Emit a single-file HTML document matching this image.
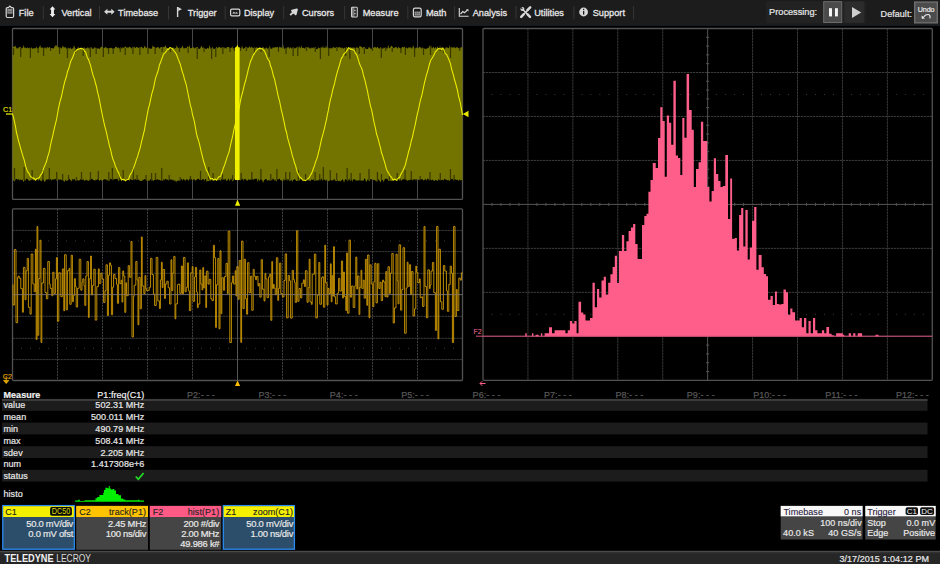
<!DOCTYPE html>
<html><head><meta charset="utf-8"><title>LeCroy</title>
<style>
html,body{margin:0;padding:0;background:#000;width:940px;height:564px;overflow:hidden;}
svg{display:block;position:absolute;left:0;top:0;font-family:"Liberation Sans", sans-serif;}
</style></head><body>
<svg width="940" height="564" viewBox="0 0 940 564">
<rect x="0" y="0" width="940" height="25" fill="#1c1c1c"/>
<rect x="0" y="25" width="940" height="1" fill="#121a24"/>
<text x="18.7" y="16.1" font-size="9.2" fill="#e8e8e8" text-anchor="start" font-weight="normal" stroke="#e8e8e8" stroke-width="0.28" letter-spacing="0.02" >File</text>
<text x="61.4" y="16.1" font-size="9.2" fill="#e8e8e8" text-anchor="start" font-weight="normal" stroke="#e8e8e8" stroke-width="0.28" letter-spacing="0.02" >Vertical</text>
<text x="118.1" y="16.1" font-size="9.2" fill="#e8e8e8" text-anchor="start" font-weight="normal" stroke="#e8e8e8" stroke-width="0.28" letter-spacing="0.02" >Timebase</text>
<text x="187.8" y="16.1" font-size="9.2" fill="#e8e8e8" text-anchor="start" font-weight="normal" stroke="#e8e8e8" stroke-width="0.28" letter-spacing="0.02" >Trigger</text>
<text x="243.9" y="16.1" font-size="9.2" fill="#e8e8e8" text-anchor="start" font-weight="normal" stroke="#e8e8e8" stroke-width="0.28" letter-spacing="0.02" >Display</text>
<text x="301.9" y="16.1" font-size="9.2" fill="#e8e8e8" text-anchor="start" font-weight="normal" stroke="#e8e8e8" stroke-width="0.28" letter-spacing="0.02" >Cursors</text>
<text x="362.7" y="16.1" font-size="9.2" fill="#e8e8e8" text-anchor="start" font-weight="normal" stroke="#e8e8e8" stroke-width="0.28" letter-spacing="0.02" >Measure</text>
<text x="425.9" y="16.1" font-size="9.2" fill="#e8e8e8" text-anchor="start" font-weight="normal" stroke="#e8e8e8" stroke-width="0.28" letter-spacing="0.02" >Math</text>
<text x="472.7" y="16.1" font-size="9.2" fill="#e8e8e8" text-anchor="start" font-weight="normal" stroke="#e8e8e8" stroke-width="0.28" letter-spacing="0.02" >Analysis</text>
<text x="534.2" y="16.1" font-size="9.2" fill="#e8e8e8" text-anchor="start" font-weight="normal" stroke="#e8e8e8" stroke-width="0.28" letter-spacing="0.02" >Utilities</text>
<text x="592.7" y="16.1" font-size="9.2" fill="#e8e8e8" text-anchor="start" font-weight="normal" stroke="#e8e8e8" stroke-width="0.28" letter-spacing="0.02" >Support</text>
<rect x="42.8" y="6" width="1" height="13.3" fill="#363636"/>
<rect x="99" y="6" width="1" height="13.3" fill="#363636"/>
<rect x="168" y="6" width="1" height="13.3" fill="#363636"/>
<rect x="224.7" y="6" width="1" height="13.3" fill="#363636"/>
<rect x="283.2" y="6" width="1" height="13.3" fill="#363636"/>
<rect x="344.1" y="6" width="1" height="13.3" fill="#363636"/>
<rect x="407.3" y="6" width="1" height="13.3" fill="#363636"/>
<rect x="454.1" y="6" width="1" height="13.3" fill="#363636"/>
<rect x="515.5" y="6" width="1" height="13.3" fill="#363636"/>
<rect x="573.4" y="6" width="1" height="13.3" fill="#363636"/>
<rect x="633.1" y="6" width="1" height="13.3" fill="#363636"/>
<path d="M7.4 7.6 H8.3 L9.9 6 L11.5 7.6 H12.4 Q13.6 7.6 13.6 8.8 V16.3 Q13.6 17.5 12.4 17.5 H7.4 Q6.2 17.5 6.2 16.3 V8.8 Q6.2 7.6 7.4 7.6 Z" fill="none" stroke="#d8d8d8" stroke-width="1.2"/>
<rect x="7.3" y="8.8" width="5.2" height="4.9" fill="#8a8a8a"/><rect x="7.3" y="11" width="5.2" height="0.7" fill="#555"/>
<path d="M52.5 6.3 L55.4 9.6 L53.9 9.6 L53.9 13.9 L55.4 13.9 L52.5 17.2 L49.6 13.9 L51.1 13.9 L51.1 9.6 L49.6 9.6 Z" fill="#f0f0f0"/>
<path d="M104.1 11.8 L107.4 8.8 L107.4 10.8 L111.3 10.8 L111.3 8.8 L114.6 11.8 L111.3 14.8 L111.3 12.8 L107.4 12.8 L107.4 14.8 Z" fill="#d8d8d8"/>
<path d="M177.6 7 L177.6 17" stroke="#d8d8d8" stroke-width="1.4"/><path d="M178.2 7 L181.9 9.2 L178.2 11 Z" fill="#d8d8d8"/>
<rect x="230.6" y="9.2" width="9.2" height="6.6" rx="1.3" fill="none" stroke="#d8d8d8" stroke-width="1.2"/>
<path d="M232.2 13.6 L233.8 11.8 L235.2 12.9 L236.4 11.9 L238.2 13.6 Z" fill="#d8d8d8"/>
<path d="M290.2 15.2 L293.2 12.2 M292 10.6 L296.9 9.4 L295.7 14.3 Z" stroke="#d8d8d8" stroke-width="1.9" fill="#d8d8d8" stroke-linejoin="round"/>
<rect x="351.6" y="7.2" width="5.6" height="9.8" rx="0.8" fill="#777" stroke="#d8d8d8" stroke-width="1.1"/>
<rect x="354.4" y="7.8" width="2.3" height="8.6" fill="#2a2a2a"/><rect x="354.3" y="9.8" width="1.2" height="1.3" fill="#d8d8d8"/><rect x="354.3" y="13" width="1.2" height="1.3" fill="#d8d8d8"/>
<rect x="413.4" y="8.2" width="7.8" height="8.6" rx="1.6" fill="#1c1c1c" stroke="#d8d8d8" stroke-width="1.2"/>
<rect x="414.6" y="11.6" width="5.4" height="4" fill="#9a9a9a"/><path d="M416.4 11.6 V15.6 M418.2 11.6 V15.6 M414.6 13.6 H420" stroke="#555" stroke-width="0.5"/>
<path d="M459.3 8 L459.3 16.3 L468.6 16.3" fill="none" stroke="#d8d8d8" stroke-width="1.1"/>
<path d="M460.5 14 L462.8 11.5 L464.5 12.8 L467.5 10" fill="none" stroke="#d8d8d8" stroke-width="1.2"/><path d="M466 9.2 L468.5 9.2 L468.5 11.6 Z" fill="#d8d8d8"/>
<path d="M522.3 9 L529 15.8 M529 9 L522.2 15.8" stroke="#d8d8d8" stroke-width="1.5"/>
<path d="M527.4 10.2 L530.2 7.4 M521.2 16.8 L523.6 14.4 M527.6 14.4 L530 16.8" stroke="#d8d8d8" stroke-width="2.5" stroke-linecap="round"/>
<circle cx="522.4" cy="8.9" r="2" fill="#d8d8d8"/><path d="M520.9 7.4 L522.3 8.8" stroke="#1c1c1c" stroke-width="1.1"/>
<circle cx="583.6" cy="12" r="4.4" fill="#d8d8d8"/><rect x="583" y="11" width="1.3" height="3.6" fill="#1c1c1c"/><rect x="583" y="8.8" width="1.3" height="1.3" fill="#1c1c1c"/>
<rect x="766" y="1.2" width="100" height="22.2" fill="#222222"/>
<text x="769.1" y="15.2" font-size="9.2" fill="#e8e8e8" text-anchor="start" font-weight="normal" stroke="#e8e8e8" stroke-width="0.2" >Processing:</text>
<rect x="823.7" y="1.7" width="18" height="20.8" fill="#4a4a4a" stroke="#6c6c6c" stroke-width="1"/>
<rect x="829" y="8.2" width="3" height="8.2" fill="#f4f4f4"/><rect x="835" y="8.2" width="2.9" height="8.2" fill="#f4f4f4"/>
<rect x="844.5" y="1.5" width="19.4" height="21.3" fill="#2c2c2c"/>
<path d="M852 7 L861.2 12.5 L852 18.1 Z" fill="#cfcfcf"/>
<text x="880.6" y="16.9" font-size="9" fill="#e8e8e8" text-anchor="start" font-weight="normal" stroke="#e8e8e8" stroke-width="0.2" letter-spacing="0.05" >Default:</text>
<rect x="914.7" y="2.1" width="22.6" height="20.7" fill="#4c4c4c" stroke="#6e6e6e" stroke-width="1.4"/>
<text x="926.1" y="11.8" font-size="7.2" fill="#eeeeee" text-anchor="middle" font-weight="normal" stroke="#eeeeee" stroke-width="0.15" letter-spacing="-0.1" >Undo</text>
<path d="M923.6 16.8 Q925.8 14.4 928.2 14.5 Q930.8 14.9 929.8 18.4" fill="none" stroke="#eee" stroke-width="1.1"/><path d="M921.6 15.6 L921.8 18.8 L925 18.4 Z" fill="#f4f4f4"/>
<path d="M57.5 28.5 L57.5 199.4" stroke="#474747" stroke-width="1"/><path d="M102.5 28.5 L102.5 199.4" stroke="#474747" stroke-width="1"/><path d="M147.5 28.5 L147.5 199.4" stroke="#474747" stroke-width="1"/><path d="M192.5 28.5 L192.5 199.4" stroke="#474747" stroke-width="1"/><path d="M282.5 28.5 L282.5 199.4" stroke="#474747" stroke-width="1"/><path d="M327.5 28.5 L327.5 199.4" stroke="#474747" stroke-width="1"/><path d="M372.5 28.5 L372.5 199.4" stroke="#474747" stroke-width="1"/><path d="M417.5 28.5 L417.5 199.4" stroke="#474747" stroke-width="1"/><path d="M12.5 49.86 L462.5 49.86" stroke="#3c3c3c" stroke-width="1" stroke-dasharray="2.3 0.7"/><path d="M12.5 71.22 L462.5 71.22" stroke="#3c3c3c" stroke-width="1" stroke-dasharray="2.3 0.7"/><path d="M12.5 92.59 L462.5 92.59" stroke="#3c3c3c" stroke-width="1" stroke-dasharray="2.3 0.7"/><path d="M12.5 135.31 L462.5 135.31" stroke="#3c3c3c" stroke-width="1" stroke-dasharray="2.3 0.7"/><path d="M12.5 156.68 L462.5 156.68" stroke="#3c3c3c" stroke-width="1" stroke-dasharray="2.3 0.7"/><path d="M12.5 178.04 L462.5 178.04" stroke="#3c3c3c" stroke-width="1" stroke-dasharray="2.3 0.7"/><path d="M237.5 28.5 L237.5 199.4 M12.5 113.95 L462.5 113.95" stroke="#555555" stroke-width="1"/><path d="M21 60.54 h1 M30 60.54 h1 M39 60.54 h1 M48 60.54 h1 M66 60.54 h1 M75 60.54 h1 M84 60.54 h1 M93 60.54 h1 M111 60.54 h1 M120 60.54 h1 M129 60.54 h1 M138 60.54 h1 M156 60.54 h1 M165 60.54 h1 M174 60.54 h1 M183 60.54 h1 M201 60.54 h1 M210 60.54 h1 M219 60.54 h1 M228 60.54 h1 M246 60.54 h1 M255 60.54 h1 M264 60.54 h1 M273 60.54 h1 M291 60.54 h1 M300 60.54 h1 M309 60.54 h1 M318 60.54 h1 M336 60.54 h1 M345 60.54 h1 M354 60.54 h1 M363 60.54 h1 M381 60.54 h1 M390 60.54 h1 M399 60.54 h1 M408 60.54 h1 M426 60.54 h1 M435 60.54 h1 M444 60.54 h1 M453 60.54 h1 M21 167.36 h1 M30 167.36 h1 M39 167.36 h1 M48 167.36 h1 M66 167.36 h1 M75 167.36 h1 M84 167.36 h1 M93 167.36 h1 M111 167.36 h1 M120 167.36 h1 M129 167.36 h1 M138 167.36 h1 M156 167.36 h1 M165 167.36 h1 M174 167.36 h1 M183 167.36 h1 M201 167.36 h1 M210 167.36 h1 M219 167.36 h1 M228 167.36 h1 M246 167.36 h1 M255 167.36 h1 M264 167.36 h1 M273 167.36 h1 M291 167.36 h1 M300 167.36 h1 M309 167.36 h1 M318 167.36 h1 M336 167.36 h1 M345 167.36 h1 M354 167.36 h1 M363 167.36 h1 M381 167.36 h1 M390 167.36 h1 M399 167.36 h1 M408 167.36 h1 M426 167.36 h1 M435 167.36 h1 M444 167.36 h1 M453 167.36 h1" stroke="#3a3a3a" stroke-width="1"/><rect x="12.5" y="28.5" width="450" height="170.9" rx="1" fill="none" stroke="#525252" stroke-width="1.3"/>
<path d="M57.5 208.8 L57.5 380.5" stroke="#3c3c3c" stroke-width="1" stroke-dasharray="2.3 0.7"/><path d="M102.5 208.8 L102.5 380.5" stroke="#3c3c3c" stroke-width="1" stroke-dasharray="2.3 0.7"/><path d="M147.5 208.8 L147.5 380.5" stroke="#3c3c3c" stroke-width="1" stroke-dasharray="2.3 0.7"/><path d="M192.5 208.8 L192.5 380.5" stroke="#3c3c3c" stroke-width="1" stroke-dasharray="2.3 0.7"/><path d="M282.5 208.8 L282.5 380.5" stroke="#3c3c3c" stroke-width="1" stroke-dasharray="2.3 0.7"/><path d="M327.5 208.8 L327.5 380.5" stroke="#3c3c3c" stroke-width="1" stroke-dasharray="2.3 0.7"/><path d="M372.5 208.8 L372.5 380.5" stroke="#3c3c3c" stroke-width="1" stroke-dasharray="2.3 0.7"/><path d="M417.5 208.8 L417.5 380.5" stroke="#3c3c3c" stroke-width="1" stroke-dasharray="2.3 0.7"/><path d="M12.5 230.4 L462.5 230.4" stroke="#3c3c3c" stroke-width="1" stroke-dasharray="2.3 0.7"/><path d="M12.5 251.6 L462.5 251.6" stroke="#3c3c3c" stroke-width="1" stroke-dasharray="2.3 0.7"/><path d="M12.5 273.3 L462.5 273.3" stroke="#3c3c3c" stroke-width="1" stroke-dasharray="2.3 0.7"/><path d="M12.5 316.3 L462.5 316.3" stroke="#3c3c3c" stroke-width="1" stroke-dasharray="2.3 0.7"/><path d="M12.5 338.3 L462.5 338.3" stroke="#3c3c3c" stroke-width="1" stroke-dasharray="2.3 0.7"/><path d="M12.5 359.6 L462.5 359.6" stroke="#3c3c3c" stroke-width="1" stroke-dasharray="2.3 0.7"/><path d="M237.5 208.8 L237.5 380.5 M12.5 294.6 L462.5 294.6" stroke="#555555" stroke-width="1"/><path d="M21 240.99 h1 M30 240.99 h1 M39 240.99 h1 M48 240.99 h1 M66 240.99 h1 M75 240.99 h1 M84 240.99 h1 M93 240.99 h1 M111 240.99 h1 M120 240.99 h1 M129 240.99 h1 M138 240.99 h1 M156 240.99 h1 M165 240.99 h1 M174 240.99 h1 M183 240.99 h1 M201 240.99 h1 M210 240.99 h1 M219 240.99 h1 M228 240.99 h1 M246 240.99 h1 M255 240.99 h1 M264 240.99 h1 M273 240.99 h1 M291 240.99 h1 M300 240.99 h1 M309 240.99 h1 M318 240.99 h1 M336 240.99 h1 M345 240.99 h1 M354 240.99 h1 M363 240.99 h1 M381 240.99 h1 M390 240.99 h1 M399 240.99 h1 M408 240.99 h1 M426 240.99 h1 M435 240.99 h1 M444 240.99 h1 M453 240.99 h1 M21 348.31 h1 M30 348.31 h1 M39 348.31 h1 M48 348.31 h1 M66 348.31 h1 M75 348.31 h1 M84 348.31 h1 M93 348.31 h1 M111 348.31 h1 M120 348.31 h1 M129 348.31 h1 M138 348.31 h1 M156 348.31 h1 M165 348.31 h1 M174 348.31 h1 M183 348.31 h1 M201 348.31 h1 M210 348.31 h1 M219 348.31 h1 M228 348.31 h1 M246 348.31 h1 M255 348.31 h1 M264 348.31 h1 M273 348.31 h1 M291 348.31 h1 M300 348.31 h1 M309 348.31 h1 M318 348.31 h1 M336 348.31 h1 M345 348.31 h1 M354 348.31 h1 M363 348.31 h1 M381 348.31 h1 M390 348.31 h1 M399 348.31 h1 M408 348.31 h1 M426 348.31 h1 M435 348.31 h1 M444 348.31 h1 M453 348.31 h1" stroke="#3a3a3a" stroke-width="1"/><rect x="12.5" y="208.8" width="450" height="171.7" rx="1" fill="none" stroke="#525252" stroke-width="1.3"/>
<path d="M527.93 28.5 L527.93 380.3" stroke="#3c3c3c" stroke-width="1" stroke-dasharray="2.3 0.7"/><path d="M572.86 28.5 L572.86 380.3" stroke="#3c3c3c" stroke-width="1" stroke-dasharray="2.3 0.7"/><path d="M617.79 28.5 L617.79 380.3" stroke="#3c3c3c" stroke-width="1" stroke-dasharray="2.3 0.7"/><path d="M662.72 28.5 L662.72 380.3" stroke="#3c3c3c" stroke-width="1" stroke-dasharray="2.3 0.7"/><path d="M752.58 28.5 L752.58 380.3" stroke="#3c3c3c" stroke-width="1" stroke-dasharray="2.3 0.7"/><path d="M797.51 28.5 L797.51 380.3" stroke="#3c3c3c" stroke-width="1" stroke-dasharray="2.3 0.7"/><path d="M842.44 28.5 L842.44 380.3" stroke="#3c3c3c" stroke-width="1" stroke-dasharray="2.3 0.7"/><path d="M887.37 28.5 L887.37 380.3" stroke="#3c3c3c" stroke-width="1" stroke-dasharray="2.3 0.7"/><path d="M483 72.47 L932.3 72.47" stroke="#3c3c3c" stroke-width="1" stroke-dasharray="2.3 0.7"/><path d="M483 116.45 L932.3 116.45" stroke="#3c3c3c" stroke-width="1" stroke-dasharray="2.3 0.7"/><path d="M483 160.43 L932.3 160.43" stroke="#3c3c3c" stroke-width="1" stroke-dasharray="2.3 0.7"/><path d="M483 248.38 L932.3 248.38" stroke="#3c3c3c" stroke-width="1" stroke-dasharray="2.3 0.7"/><path d="M483 292.35 L932.3 292.35" stroke="#3c3c3c" stroke-width="1" stroke-dasharray="2.3 0.7"/><path d="M483 336.32 L932.3 336.32" stroke="#3c3c3c" stroke-width="1" stroke-dasharray="2.3 0.7"/><path d="M707.65 28.5 L707.65 380.3 M483 204.4 L932.3 204.4" stroke="#555555" stroke-width="1"/><path d="M491.99 202.8 L491.99 206 M500.97 202.8 L500.97 206 M509.96 202.8 L509.96 206 M518.94 202.8 L518.94 206 M536.92 202.8 L536.92 206 M545.9 202.8 L545.9 206 M554.89 202.8 L554.89 206 M563.87 202.8 L563.87 206 M581.85 202.8 L581.85 206 M590.83 202.8 L590.83 206 M599.82 202.8 L599.82 206 M608.8 202.8 L608.8 206 M626.78 202.8 L626.78 206 M635.76 202.8 L635.76 206 M644.75 202.8 L644.75 206 M653.73 202.8 L653.73 206 M671.71 202.8 L671.71 206 M680.69 202.8 L680.69 206 M689.68 202.8 L689.68 206 M698.66 202.8 L698.66 206 M716.64 202.8 L716.64 206 M725.62 202.8 L725.62 206 M734.61 202.8 L734.61 206 M743.59 202.8 L743.59 206 M761.57 202.8 L761.57 206 M770.55 202.8 L770.55 206 M779.54 202.8 L779.54 206 M788.52 202.8 L788.52 206 M806.5 202.8 L806.5 206 M815.48 202.8 L815.48 206 M824.47 202.8 L824.47 206 M833.45 202.8 L833.45 206 M851.43 202.8 L851.43 206 M860.41 202.8 L860.41 206 M869.4 202.8 L869.4 206 M878.38 202.8 L878.38 206 M896.36 202.8 L896.36 206 M905.34 202.8 L905.34 206 M914.33 202.8 L914.33 206 M923.31 202.8 L923.31 206 M706.05 37.3 L709.25 37.3 M706.05 46.09 L709.25 46.09 M706.05 54.89 L709.25 54.89 M706.05 63.68 L709.25 63.68 M706.05 81.27 L709.25 81.27 M706.05 90.06 L709.25 90.06 M706.05 98.86 L709.25 98.86 M706.05 107.66 L709.25 107.66 M706.05 125.25 L709.25 125.25 M706.05 134.04 L709.25 134.04 M706.05 142.84 L709.25 142.84 M706.05 151.63 L709.25 151.63 M706.05 169.22 L709.25 169.22 M706.05 178.02 L709.25 178.02 M706.05 186.81 L709.25 186.81 M706.05 195.6 L709.25 195.6 M706.05 213.19 L709.25 213.19 M706.05 221.99 L709.25 221.99 M706.05 230.79 L709.25 230.79 M706.05 239.58 L709.25 239.58 M706.05 257.17 L709.25 257.17 M706.05 265.97 L709.25 265.97 M706.05 274.76 L709.25 274.76 M706.05 283.56 L709.25 283.56 M706.05 301.15 L709.25 301.15 M706.05 309.94 L709.25 309.94 M706.05 318.74 L709.25 318.74 M706.05 327.53 L709.25 327.53 M706.05 345.12 L709.25 345.12 M706.05 353.92 L709.25 353.92 M706.05 362.71 L709.25 362.71 M706.05 371.5 L709.25 371.5" stroke="#505050" stroke-width="1"/><path d="M491.49 94.46 h1 M500.47 94.46 h1 M509.46 94.46 h1 M518.44 94.46 h1 M536.42 94.46 h1 M545.4 94.46 h1 M554.39 94.46 h1 M563.37 94.46 h1 M581.35 94.46 h1 M590.33 94.46 h1 M599.32 94.46 h1 M608.3 94.46 h1 M626.28 94.46 h1 M635.26 94.46 h1 M644.25 94.46 h1 M653.23 94.46 h1 M671.21 94.46 h1 M680.19 94.46 h1 M689.18 94.46 h1 M698.16 94.46 h1 M716.14 94.46 h1 M725.12 94.46 h1 M734.11 94.46 h1 M743.09 94.46 h1 M761.07 94.46 h1 M770.05 94.46 h1 M779.04 94.46 h1 M788.02 94.46 h1 M806 94.46 h1 M814.98 94.46 h1 M823.97 94.46 h1 M832.95 94.46 h1 M850.93 94.46 h1 M859.91 94.46 h1 M868.9 94.46 h1 M877.88 94.46 h1 M895.86 94.46 h1 M904.84 94.46 h1 M913.83 94.46 h1 M922.81 94.46 h1 M491.49 314.34 h1 M500.47 314.34 h1 M509.46 314.34 h1 M518.44 314.34 h1 M536.42 314.34 h1 M545.4 314.34 h1 M554.39 314.34 h1 M563.37 314.34 h1 M581.35 314.34 h1 M590.33 314.34 h1 M599.32 314.34 h1 M608.3 314.34 h1 M626.28 314.34 h1 M635.26 314.34 h1 M644.25 314.34 h1 M653.23 314.34 h1 M671.21 314.34 h1 M680.19 314.34 h1 M689.18 314.34 h1 M698.16 314.34 h1 M716.14 314.34 h1 M725.12 314.34 h1 M734.11 314.34 h1 M743.09 314.34 h1 M761.07 314.34 h1 M770.05 314.34 h1 M779.04 314.34 h1 M788.02 314.34 h1 M806 314.34 h1 M814.98 314.34 h1 M823.97 314.34 h1 M832.95 314.34 h1 M850.93 314.34 h1 M859.91 314.34 h1 M868.9 314.34 h1 M877.88 314.34 h1 M895.86 314.34 h1 M904.84 314.34 h1 M913.83 314.34 h1 M922.81 314.34 h1" stroke="#3a3a3a" stroke-width="1"/><rect x="483" y="28.5" width="449.3" height="351.8" rx="1" fill="none" stroke="#525252" stroke-width="1.3"/>
<polygon points="12.5,47.48 13.25,47.1 14,46.35 14.75,46.79 15.5,45.43 16.25,48.68 17,47.24 17.75,48.97 18.5,47.65 19.25,46.81 20,47.4 20.75,46.98 21.5,48.66 22.25,48.1 23,47.59 23.75,44.87 24.5,48.33 25.25,47.45 26,47.79 26.75,48.61 27.5,47.29 28.25,47.96 29,48.45 29.75,47.6 30.5,48.52 31.25,47.04 32,48.53 32.75,48.8 33.5,48.37 34.25,48.09 35,48.72 35.75,47.84 36.5,46.85 37.25,48.25 38,48.67 38.75,47.63 39.5,46.75 40.25,44.75 41,48.54 41.75,47.29 42.5,47.41 43.25,48.02 44,48.67 44.75,47.37 45.5,47.56 46.25,49 47,47.12 47.75,47.26 48.5,48.11 49.25,46.71 50,47.59 50.75,48.99 51.5,47.94 52.25,48.07 53,48.57 53.75,48.61 54.5,46.74 55.25,44.87 56,47.09 56.75,44.7 57.5,46.94 58.25,46.76 59,48.17 59.75,47.31 60.5,47.57 61.25,48.74 62,47.82 62.75,45.26 63.5,47.34 64.25,46.96 65,47.97 65.75,46.82 66.5,49.05 67.25,48.37 68,47.58 68.75,48.55 69.5,48.57 70.25,47.24 71,49.06 71.75,48.63 72.5,48.48 73.25,47.94 74,44.97 74.75,47.32 75.5,49 76.25,48.95 77,48.99 77.75,47.23 78.5,47.17 79.25,48.2 80,48.72 80.75,48.27 81.5,46.9 82.25,48.88 83,48.5 83.75,47.13 84.5,47.5 85.25,49.03 86,47.66 86.75,48.44 87.5,47 88.25,48.87 89,47.05 89.75,49.05 90.5,47.54 91.25,46.94 92,48.26 92.75,48.94 93.5,48.79 94.25,47.21 95,47.4 95.75,48.11 96.5,47.71 97.25,48.88 98,47.8 98.75,48.87 99.5,48.9 100.25,47.98 101,46.74 101.75,46.64 102.5,47.11 103.25,48.44 104,47.48 104.75,48.03 105.5,46.95 106.25,47.3 107,48.55 107.75,48.05 108.5,48.89 109.25,48.17 110,47.93 110.75,47.79 111.5,47.85 112.25,48.38 113,48.96 113.75,48.04 114.5,48.72 115.25,46.99 116,46.87 116.75,46.88 117.5,48.58 118.25,47.07 119,48.28 119.75,48.82 120.5,47.23 121.25,47.66 122,49.08 122.75,47.09 123.5,47.94 124.25,47.17 125,47.32 125.75,46.09 126.5,48.2 127.25,46.85 128,48.59 128.75,46.95 129.5,46.8 130.25,47.35 131,47.71 131.75,48.67 132.5,47.06 133.25,48.07 134,46.14 134.75,47.57 135.5,48.22 136.25,46.9 137,46.86 137.75,47.79 138.5,48.03 139.25,47.34 140,47.96 140.75,46.96 141.5,46.82 142.25,47.45 143,48.52 143.75,47.9 144.5,45.66 145.25,46.74 146,48.02 146.75,47.84 147.5,46.96 148.25,47.74 149,48.7 149.75,47.92 150.5,49.06 151.25,48.7 152,48.23 152.75,45.36 153.5,46.87 154.25,47.31 155,46.9 155.75,48.79 156.5,47.38 157.25,47.4 158,47.08 158.75,47.33 159.5,49.03 160.25,47.29 161,47.44 161.75,46.7 162.5,47.84 163.25,47.18 164,46.71 164.75,46.92 165.5,45.06 166.25,47.26 167,47.97 167.75,48.28 168.5,48.81 169.25,47.48 170,47.06 170.75,47.83 171.5,48.84 172.25,48.46 173,47.03 173.75,47.91 174.5,48.63 175.25,48.1 176,48.34 176.75,45.08 177.5,47.16 178.25,48.04 179,48.2 179.75,47.37 180.5,48.5 181.25,47.98 182,46.86 182.75,45.47 183.5,48.45 184.25,48.48 185,47.89 185.75,47.85 186.5,48.54 187.25,46.11 188,47.31 188.75,47.43 189.5,44.9 190.25,48.31 191,48.32 191.75,47.94 192.5,47.55 193.25,47.18 194,47.59 194.75,48.67 195.5,47.78 196.25,47.2 197,47.21 197.75,47.04 198.5,48.99 199.25,48.67 200,48.83 200.75,47.26 201.5,45.38 202.25,47.88 203,47.42 203.75,47.53 204.5,48.09 205.25,48.71 206,48.92 206.75,48.86 207.5,47.59 208.25,49.1 209,47.57 209.75,45.11 210.5,48.7 211.25,48.95 212,47.34 212.75,47.16 213.5,48.99 214.25,48.65 215,48.89 215.75,48.02 216.5,46.82 217.25,47.78 218,48.25 218.75,46.82 219.5,47.01 220.25,47.52 221,48.47 221.75,47.32 222.5,47.42 223.25,47.65 224,47.09 224.75,48.87 225.5,47.23 226.25,49.09 227,47.04 227.75,46.92 228.5,46.92 229.25,47.32 230,48.83 230.75,47.69 231.5,47.96 232.25,45.71 233,49.02 233.75,47.91 234.5,48.77 235.25,47.35 236,47.66 236.75,48.99 237.5,46.38 238.25,48.4 239,47.84 239.75,46.7 240.5,48.92 241.25,48.75 242,45.18 242.75,47.95 243.5,48.96 244.25,48.25 245,47.8 245.75,46.79 246.5,47.26 247.25,48.25 248,47.01 248.75,48.23 249.5,45.78 250.25,48.1 251,47.24 251.75,46.73 252.5,47.81 253.25,48.25 254,47.84 254.75,47.29 255.5,48.39 256.25,46.75 257,48.32 257.75,47.32 258.5,48.92 259.25,46.78 260,47.71 260.75,47.18 261.5,48.47 262.25,47.19 263,47.45 263.75,47.25 264.5,48.53 265.25,48.98 266,47.15 266.75,47.7 267.5,48.98 268.25,47.64 269,49.04 269.75,45.31 270.5,48.86 271.25,48.46 272,48.94 272.75,47.15 273.5,47.65 274.25,47.61 275,47.5 275.75,46.71 276.5,47.54 277.25,47 278,47.2 278.75,48.67 279.5,46.42 280.25,47.59 281,47.16 281.75,47.38 282.5,48.65 283.25,44.45 284,48.91 284.75,48.49 285.5,47.51 286.25,49 287,47.33 287.75,47.46 288.5,46.71 289.25,48.9 290,47.05 290.75,47.84 291.5,48.99 292.25,47.3 293,47.88 293.75,47.14 294.5,48.47 295.25,48.55 296,47.49 296.75,47.57 297.5,46.89 298.25,48.51 299,45.74 299.75,47.48 300.5,48.82 301.25,45.08 302,47.9 302.75,47.77 303.5,47.7 304.25,48.32 305,48.73 305.75,46.99 306.5,47.41 307.25,47.6 308,47.18 308.75,47.29 309.5,48.82 310.25,47.48 311,49.08 311.75,47.26 312.5,48.27 313.25,46.95 314,48.67 314.75,47.13 315.5,46.99 316.25,49.04 317,48.93 317.75,48.78 318.5,47.32 319.25,47.96 320,48.19 320.75,47.58 321.5,47.19 322.25,48.14 323,45.51 323.75,48.33 324.5,47.45 325.25,48.61 326,45.34 326.75,48.02 327.5,46.92 328.25,48.37 329,47.38 329.75,48.99 330.5,48.06 331.25,47.7 332,49.09 332.75,47.17 333.5,46.94 334.25,47.72 335,47.67 335.75,47.81 336.5,46.74 337.25,48.24 338,46.91 338.75,47.59 339.5,47.05 340.25,47.95 341,46.96 341.75,48.63 342.5,47.17 343.25,48.96 344,47.67 344.75,47.63 345.5,48.19 346.25,47.08 347,47.23 347.75,48.73 348.5,47.14 349.25,47.66 350,47.62 350.75,47.29 351.5,47.76 352.25,48.11 353,46.98 353.75,48.02 354.5,47.43 355.25,48.1 356,48.28 356.75,46.8 357.5,47.87 358.25,48.53 359,47.8 359.75,45.66 360.5,46.34 361.25,47.02 362,46.9 362.75,48.57 363.5,46.83 364.25,47.61 365,47.03 365.75,49.09 366.5,48.66 367.25,49.06 368,49 368.75,47.1 369.5,47.31 370.25,48.51 371,48.85 371.75,48.66 372.5,47.91 373.25,47.2 374,47.91 374.75,46.79 375.5,47.09 376.25,48.33 377,47.1 377.75,46.98 378.5,48.23 379.25,48.8 380,48.09 380.75,46.95 381.5,48.21 382.25,48.61 383,49.08 383.75,47.56 384.5,47.76 385.25,48.03 386,47.31 386.75,49.06 387.5,48.29 388.25,44.58 389,48.18 389.75,47.93 390.5,47.02 391.25,45.77 392,45.94 392.75,47.24 393.5,48.11 394.25,48.2 395,47.02 395.75,47.28 396.5,46.93 397.25,48.79 398,47.66 398.75,46.73 399.5,48.05 400.25,48.25 401,48.95 401.75,47.3 402.5,46.81 403.25,47.67 404,46.84 404.75,46.73 405.5,48.96 406.25,47.18 407,47.92 407.75,48.65 408.5,47.44 409.25,46.82 410,48.58 410.75,46.72 411.5,48.49 412.25,48.48 413,45.32 413.75,46.79 414.5,48.5 415.25,48.73 416,47.34 416.75,47.75 417.5,47.96 418.25,48.24 419,47.22 419.75,46.74 420.5,47.27 421.25,48.97 422,47.48 422.75,47.49 423.5,48.88 424.25,48.36 425,49.05 425.75,48.72 426.5,48.76 427.25,48.44 428,47.44 428.75,47.97 429.5,44.81 430.25,48.93 431,44.64 431.75,48.36 432.5,48.37 433.25,46.86 434,47.57 434.75,48.67 435.5,46.86 436.25,48.89 437,46.96 437.75,46.59 438.5,48.65 439.25,48.68 440,45.13 440.75,48.52 441.5,47.47 442.25,46.75 443,47.38 443.75,47.58 444.5,49.01 445.25,48.74 446,46.77 446.75,47.75 447.5,47.53 448.25,47.99 449,48.32 449.75,45.11 450.5,48.53 451.25,46.71 452,47.88 452.75,47.14 453.5,47.53 454.25,47.33 455,47.38 455.75,48.38 456.5,46.96 457.25,46.89 458,48.37 458.75,48.21 459.5,47.66 460.25,48.56 461,46.76 461.75,47.33 462.5,47.9 462.5,180.95 461.75,179.68 461,180.56 460.25,180.24 459.5,179.28 458.75,180.83 458,180.53 457.25,179.62 456.5,180.04 455.75,179.69 455,179.01 454.25,179.2 453.5,180.83 452.75,178.77 452,179.28 451.25,178.78 450.5,178.87 449.75,180.49 449,181.19 448.25,179.45 447.5,180.68 446.75,179.6 446,180.21 445.25,178.92 444.5,178.4 443.75,180.67 443,179.8 442.25,179.69 441.5,180.11 440.75,180.52 440,179.59 439.25,180.55 438.5,178.99 437.75,180.94 437,180.4 436.25,180.34 435.5,179.66 434.75,181.02 434,180.65 433.25,180.19 432.5,179.57 431.75,180.16 431,180.33 430.25,178.85 429.5,180.63 428.75,179.77 428,178.41 427.25,178.78 426.5,181.12 425.75,178.6 425,179.92 424.25,179.84 423.5,180.79 422.75,179.53 422,178.93 421.25,179.48 420.5,178.67 419.75,179.92 419,180.34 418.25,179.56 417.5,179.36 416.75,178.97 416,181.12 415.25,178.96 414.5,179.48 413.75,178.69 413,180.73 412.25,179.71 411.5,178.98 410.75,179.36 410,180.76 409.25,179.7 408.5,179.94 407.75,180.8 407,180.85 406.25,179.43 405.5,179.58 404.75,178.31 404,179.14 403.25,179.21 402.5,179.59 401.75,180.28 401,181.09 400.25,178.47 399.5,181.02 398.75,178.72 398,180.22 397.25,181.16 396.5,179.05 395.75,178.73 395,180.63 394.25,178.76 393.5,180.68 392.75,180.97 392,180.64 391.25,180.98 390.5,180.82 389.75,180.38 389,180.53 388.25,180.95 387.5,179.09 386.75,178.72 386,178.48 385.25,178.73 384.5,179.79 383.75,182.57 383,179.7 382.25,180.3 381.5,179.42 380.75,182.46 380,181.43 379.25,180.35 378.5,179.29 377.75,179.83 377,182.43 376.25,180.18 375.5,180.89 374.75,179.72 374,180.61 373.25,179.61 372.5,179.96 371.75,179.18 371,179.51 370.25,179.12 369.5,181.22 368.75,180.68 368,179.25 367.25,180.06 366.5,182.1 365.75,180.96 365,178.45 364.25,178.32 363.5,181.06 362.75,180.27 362,181.03 361.25,180.15 360.5,180.39 359.75,180.34 359,180.3 358.25,180.59 357.5,180.39 356.75,181.04 356,179.41 355.25,180.66 354.5,179.07 353.75,179.57 353,179.59 352.25,182.24 351.5,178.42 350.75,180.73 350,181.06 349.25,178.34 348.5,180.08 347.75,181.24 347,179.54 346.25,180.23 345.5,178.76 344.75,180.35 344,182.94 343.25,180.13 342.5,179.03 341.75,180.41 341,180.44 340.25,181.75 339.5,180.43 338.75,181.1 338,181.19 337.25,179.64 336.5,181.37 335.75,180.49 335,180.88 334.25,178.48 333.5,180.02 332.75,180.33 332,180.69 331.25,180.23 330.5,179.55 329.75,180.66 329,180.65 328.25,181.13 327.5,180.41 326.75,179.3 326,181.23 325.25,180.1 324.5,179.59 323.75,179.43 323,180.11 322.25,180.72 321.5,178.31 320.75,179.57 320,180.75 319.25,178.43 318.5,180.74 317.75,180.02 317,180.85 316.25,180.35 315.5,180.45 314.75,180.69 314,180.55 313.25,179 312.5,180.33 311.75,178.92 311,180.55 310.25,181.29 309.5,180.62 308.75,180.04 308,180.96 307.25,179.73 306.5,178.87 305.75,178.84 305,179.39 304.25,179.51 303.5,180.74 302.75,179.42 302,180.2 301.25,178.77 300.5,179.33 299.75,180.34 299,180.9 298.25,180 297.5,180.64 296.75,181.14 296,180.76 295.25,179.46 294.5,178.94 293.75,179.97 293,179.67 292.25,182.23 291.5,179.49 290.75,181.18 290,179.99 289.25,181.17 288.5,179.48 287.75,178.78 287,181.28 286.25,178.42 285.5,179.36 284.75,181.01 284,178.44 283.25,180.43 282.5,181.55 281.75,180.56 281,180.33 280.25,180.07 279.5,178.62 278.75,179.07 278,179.74 277.25,179.02 276.5,181.77 275.75,180.74 275,178.96 274.25,180.9 273.5,178.72 272.75,178.59 272,180.83 271.25,179.66 270.5,180.77 269.75,180.18 269,180.39 268.25,179.96 267.5,180.91 266.75,179.54 266,179.11 265.25,179.3 264.5,179.77 263.75,181.01 263,183.03 262.25,180.3 261.5,179.73 260.75,179.07 260,179.39 259.25,181.29 258.5,178.59 257.75,182.44 257,179.18 256.25,178.35 255.5,179.32 254.75,178.31 254,179.88 253.25,179.61 252.5,178.95 251.75,178.71 251,180.61 250.25,179.06 249.5,180.13 248.75,179.12 248,180.14 247.25,180.73 246.5,180.37 245.75,179.52 245,178.47 244.25,179.31 243.5,180.89 242.75,178.35 242,179.73 241.25,179.1 240.5,180.79 239.75,178.79 239,181.12 238.25,179.64 237.5,178.66 236.75,180.75 236,179.26 235.25,179.44 234.5,178.48 233.75,181.16 233,179.84 232.25,181.85 231.5,178.97 230.75,178.61 230,180.94 229.25,180.4 228.5,178.35 227.75,180.03 227,180.41 226.25,180.91 225.5,178.44 224.75,179.78 224,179.14 223.25,179.52 222.5,180.08 221.75,178.74 221,180.54 220.25,180.78 219.5,179.47 218.75,180.82 218,179.49 217.25,180.63 216.5,179.02 215.75,179.61 215,180.71 214.25,180.75 213.5,178.46 212.75,181.17 212,179.05 211.25,180.2 210.5,180.76 209.75,180.09 209,181.21 208.25,181.11 207.5,180.73 206.75,182.24 206,179.1 205.25,179.12 204.5,181.07 203.75,179.05 203,179.6 202.25,179.16 201.5,180.24 200.75,180.08 200,179.84 199.25,179.7 198.5,178.75 197.75,178.69 197,179.52 196.25,180.12 195.5,180.82 194.75,180.01 194,178.9 193.25,179.68 192.5,180.14 191.75,179.23 191,178.96 190.25,179.45 189.5,178.34 188.75,180.89 188,179.97 187.25,179.15 186.5,179.19 185.75,180.52 185,180.4 184.25,179.62 183.5,178.63 182.75,181.18 182,178.76 181.25,179.36 180.5,180.15 179.75,180.76 179,180.52 178.25,180.58 177.5,180.65 176.75,181.04 176,182.44 175.25,180.06 174.5,181.19 173.75,179.55 173,180.92 172.25,179.44 171.5,179.67 170.75,179.18 170,179.97 169.25,179.27 168.5,180.85 167.75,179.63 167,179.21 166.25,180.03 165.5,178.56 164.75,179.27 164,180.81 163.25,178.91 162.5,181.13 161.75,179.99 161,181.06 160.25,179.92 159.5,179.85 158.75,180.36 158,179.37 157.25,179.35 156.5,180.33 155.75,178.6 155,179.5 154.25,180.02 153.5,181.19 152.75,179.62 152,181.29 151.25,179.89 150.5,178.81 149.75,181.24 149,179.84 148.25,180.98 147.5,180.76 146.75,180.96 146,178.77 145.25,179.83 144.5,178.86 143.75,180.19 143,179.36 142.25,181.03 141.5,180.66 140.75,180.98 140,180.83 139.25,180.3 138.5,179.79 137.75,179.1 137,179.89 136.25,180.02 135.5,178.66 134.75,180.58 134,178.6 133.25,179.87 132.5,180.14 131.75,180.03 131,179.27 130.25,179.36 129.5,180.91 128.75,180.05 128,179.65 127.25,178.46 126.5,180.05 125.75,179.62 125,180.91 124.25,180.86 123.5,181 122.75,179.21 122,181.18 121.25,181.15 120.5,179.47 119.75,178.96 119,180.93 118.25,180.68 117.5,178.82 116.75,178.86 116,179.17 115.25,178.64 114.5,179.46 113.75,178.5 113,180.78 112.25,179.03 111.5,179.15 110.75,178.4 110,179.32 109.25,180.96 108.5,180.81 107.75,179.63 107,180.71 106.25,179.36 105.5,179.43 104.75,178.92 104,179.81 103.25,179.66 102.5,180.42 101.75,181 101,179.4 100.25,180.12 99.5,180.92 98.75,179.84 98,179.11 97.25,179.45 96.5,180 95.75,179.82 95,180.85 94.25,180.29 93.5,179.99 92.75,179.8 92,178.5 91.25,178.98 90.5,180.45 89.75,179.51 89,180.62 88.25,180.88 87.5,180.49 86.75,180.29 86,179.54 85.25,180.4 84.5,180.84 83.75,180.19 83,178.65 82.25,180.5 81.5,178.75 80.75,178.89 80,180.06 79.25,180.21 78.5,180.82 77.75,180.45 77,179.6 76.25,181.02 75.5,180.63 74.75,178.43 74,180.61 73.25,178.63 72.5,178.93 71.75,181.94 71,179.48 70.25,180.79 69.5,178.57 68.75,179.57 68,180.37 67.25,180.79 66.5,181.05 65.75,179.59 65,181.08 64.25,181.99 63.5,180.72 62.75,179.94 62,180.21 61.25,179.76 60.5,179.53 59.75,179.23 59,180.42 58.25,179.01 57.5,179.85 56.75,181.11 56,179.2 55.25,178.73 54.5,179.3 53.75,179.94 53,178.81 52.25,180.1 51.5,180.6 50.75,178.64 50,179.38 49.25,178.48 48.5,178.89 47.75,179.64 47,179.27 46.25,179.39 45.5,180.5 44.75,181.99 44,181.24 43.25,178.63 42.5,179.6 41.75,181.77 41,180.23 40.25,181.11 39.5,179.05 38.75,180.26 38,180.82 37.25,178.86 36.5,180.84 35.75,178.81 35,180.79 34.25,179.28 33.5,180.78 32.75,179.41 32,179.41 31.25,180.15 30.5,180.18 29.75,180.42 29,181.13 28.25,179.8 27.5,179.2 26.75,178.54 26,178.79 25.25,181.29 24.5,179.62 23.75,182.15 23,180.87 22.25,179.58 21.5,180.28 20.75,179.56 20,179.62 19.25,180.78 18.5,178.79 17.75,179.63 17,179.34 16.25,178.56 15.5,179.68 14.75,181.03 14,181.22 13.25,180.16 12.5,178.48" fill="#737300"/>
<path d="M13.5 48 v7 M20.67 48 v9 M30.37 48 v10 M38.13 48 v5 M43.58 48 v8 M50.53 48 v3 M59.54 48 v6 M67.45 48 v10 M75.44 48 v5 M83.24 48 v8 M90.34 48 v9 M96.18 48 v6 M103.36 48 v9 M108.55 48 v6 M113.23 48 v6 M120.29 48 v4 M125.23 48 v7 M132.95 48 v6 M139.9 48 v7 M148.01 48 v6 M155.11 48 v6 M162.13 48 v4 M170.41 48 v4 M179.44 48 v4 M188.15 48 v5 M197.26 48 v11 M204.06 48 v4 M211.63 48 v11 M215.79 48 v9 M222.83 48 v6 M229.99 48 v4 M234.38 48 v3 M240.51 48 v3 M246.43 48 v3 M254.49 48 v6 M260.98 48 v4 M269.08 48 v9 M278.48 48 v4 M286.02 48 v6 M293.18 48 v8 M297.77 48 v8 M306.5 48 v3 M315.36 48 v4 M320.42 48 v11 M328.71 48 v8 M336.9 48 v3 M345.71 48 v8 M349.86 48 v11 M355.49 48 v4 M359.21 48 v6 M364.36 48 v6 M372.37 48 v3 M381.32 48 v10 M385.56 48 v3 M392.23 48 v4 M400.94 48 v5 M405.41 48 v7 M414.59 48 v9 M423.53 48 v7 M430.53 48 v7 M440.2 48 v3 M443.86 48 v5 M450.52 48 v10 M459.7 48 v3" stroke="#3a3a00" stroke-width="1.25"/>
<path d="M14.5 180 v-12 M24.14 180 v-13 M32.14 180 v-10 M42.89 180 v-10 M49.34 180 v-12 M56.72 180 v-8 M62.69 180 v-6 M68.53 180 v-5 M76.44 180 v-3 M81.53 180 v-8 M90.48 180 v-8 M98.31 180 v-9 M108.84 180 v-8 M112.39 180 v-12 M119.51 180 v-6 M123.17 180 v-10 M133.24 180 v-12 M137.08 180 v-5 M146.03 180 v-5 M151.58 180 v-7 M155.55 180 v-7 M161.73 180 v-12 M169.19 180 v-5 M180.13 180 v-3 M190.49 180 v-4 M200.54 180 v-9 M208.79 180 v-13 M213.03 180 v-7 M222.48 180 v-6 M232.52 180 v-5 M241.13 180 v-7 M251.85 180 v-8 M260.9 180 v-11 M270.8 180 v-6 M276.93 180 v-11 M285.8 180 v-8 M289.75 180 v-8 M298.29 180 v-10 M305.57 180 v-6 M315.13 180 v-8 M319.77 180 v-6 M323.32 180 v-13 M330.22 180 v-10 M336.69 180 v-7 M347.16 180 v-12 M351.16 180 v-7 M360.06 180 v-7 M369.01 180 v-11 M377.45 180 v-8 M381.5 180 v-6 M389.37 180 v-4 M397.26 180 v-7 M405.11 180 v-10 M411.29 180 v-9 M420.2 180 v-4 M429.99 180 v-8 M440.23 180 v-7 M450.47 180 v-11 M454.14 180 v-5" stroke="#3a3a00" stroke-width="1.25"/>
<polyline points="12.5,113.62 13.5,117.4 14.5,121.55 15.5,126.71 16.5,132.53 17.5,136.38 18.5,140.81 19.5,144.16 20.5,147.99 21.5,151.31 22.5,154.8 23.5,157.96 24.5,161.06 25.5,165.59 26.5,168.71 27.5,171.72 28.5,172.65 29.5,174.37 30.5,176.67 31.5,176.99 32.5,178.06 33.5,178.12 34.5,178.73 35.5,180.11 36.5,178.77 37.5,178.53 38.5,178.08 39.5,177.53 40.5,175.02 41.5,174.09 42.5,172.35 43.5,168.61 44.5,166.27 45.5,163.89 46.5,161.51 47.5,157.28 48.5,154.36 49.5,150.81 50.5,145.12 51.5,140.61 52.5,136.85 53.5,132.03 54.5,127.52 55.5,123.6 56.5,119.67 57.5,113.97 58.5,108.4 59.5,103.66 60.5,99.73 61.5,96.31 62.5,91.49 63.5,86.97 64.5,82.64 65.5,79.28 66.5,76.24 67.5,71.52 68.5,69.26 69.5,65.86 70.5,62.02 71.5,59.64 72.5,57.83 73.5,55.3 74.5,52.23 75.5,51.29 76.5,50.41 77.5,49.46 78.5,49.17 79.5,48.74 80.5,48.23 81.5,48.62 82.5,48.74 83.5,49.34 84.5,51.07 85.5,51.91 86.5,54.9 87.5,58.1 88.5,59.35 89.5,62.4 90.5,65.06 91.5,69.35 92.5,73.34 93.5,76.62 94.5,79.12 95.5,83.25 96.5,86.73 97.5,91.86 98.5,95.62 99.5,100.48 100.5,105.54 101.5,110.8 102.5,115.74 103.5,120.51 104.5,125.02 105.5,128.97 106.5,132.69 107.5,137.41 108.5,141.3 109.5,146.13 110.5,149.11 111.5,153.86 112.5,158.03 113.5,160.65 114.5,162.97 115.5,166.68 116.5,168.16 117.5,171.25 118.5,172.39 119.5,175.39 120.5,177.88 121.5,179.17 122.5,179.43 123.5,179.38 124.5,179.61 125.5,180.73 126.5,179.9 127.5,179.58 128.5,179.26 129.5,176.55 130.5,174.09 131.5,173.2 132.5,170.6 133.5,168.14 134.5,165.36 135.5,162.57 136.5,159.16 137.5,156.92 138.5,153.17 139.5,150.34 140.5,146.52 141.5,141.8 142.5,138.18 143.5,133.83 144.5,129.78 145.5,123.7 146.5,118.55 147.5,113.14 148.5,107.87 149.5,104.8 150.5,99.8 151.5,95.2 152.5,91.39 153.5,88.22 154.5,83.1 155.5,78.17 156.5,75.39 157.5,72.54 158.5,69.33 159.5,64.74 160.5,62.55 161.5,59.56 162.5,56.95 163.5,54.03 164.5,53.46 165.5,52.11 166.5,51.24 167.5,49.08 168.5,49.4 169.5,47.94 170.5,47.62 171.5,48.2 172.5,48.66 173.5,50.39 174.5,51.49 175.5,52.81 176.5,54.58 177.5,57.17 178.5,59.93 179.5,62.23 180.5,64.81 181.5,69.02 182.5,72.36 183.5,75.1 184.5,79.32 185.5,82.21 186.5,85.95 187.5,90.99 188.5,95.79 189.5,100.78 190.5,105.7 191.5,109.01 192.5,114.72 193.5,118.16 194.5,122.14 195.5,128.18 196.5,133.58 197.5,137.54 198.5,140.41 199.5,144.2 200.5,148.67 201.5,152.99 202.5,156.72 203.5,161.19 204.5,164 205.5,167.41 206.5,170.64 207.5,171.46 208.5,174.62 209.5,176.83 210.5,178.87 211.5,178.77 212.5,178.58 213.5,179.91 214.5,179.14 215.5,179.04 216.5,180.19 217.5,178.74 218.5,176.97 219.5,176.85 220.5,176.31 221.5,173.56 222.5,171 223.5,167.69 224.5,165.37 225.5,162.27 226.5,159.09 227.5,155.85 228.5,153.61 229.5,150.09 230.5,145.22 231.5,140.9 232.5,136.77 233.5,132.13 234.5,127 235.5,123.41 236.5,119.66 237.5,115.38 238.5,111.18 239.5,106.26 240.5,100.65 241.5,96.11 242.5,92.77 243.5,88.46 244.5,84.39 245.5,81.01 246.5,77.19 247.5,73.21 248.5,68.3 249.5,65.39 250.5,61.31 251.5,59.43 252.5,56.8 253.5,54.86 254.5,53.4 255.5,51.54 256.5,50.6 257.5,49.37 258.5,48.83 259.5,48.34 260.5,48.63 261.5,48.73 262.5,48.96 263.5,50.11 264.5,51.14 265.5,53.55 266.5,55.84 267.5,58.43 268.5,60 269.5,61.54 270.5,65.81 271.5,68.23 272.5,72.06 273.5,76.29 274.5,78.81 275.5,83.62 276.5,87.96 277.5,92.92 278.5,97.37 279.5,100.77 280.5,105.94 281.5,110.94 282.5,114.67 283.5,119.28 284.5,123.83 285.5,129.29 286.5,132.26 287.5,137.26 288.5,141.04 289.5,144.53 290.5,148.05 291.5,152.03 292.5,156.43 293.5,159.16 294.5,163.07 295.5,165.4 296.5,169.41 297.5,172.44 298.5,174.5 299.5,176.89 300.5,177.47 301.5,178.24 302.5,180 303.5,180.16 304.5,180.15 305.5,180.6 306.5,179.83 307.5,178.89 308.5,178.42 309.5,177.13 310.5,175.05 311.5,173.67 312.5,170.95 313.5,168.21 314.5,165.67 315.5,162.07 316.5,159.64 317.5,156.89 318.5,152.43 319.5,148.88 320.5,143.92 321.5,139.47 322.5,135.81 323.5,132.16 324.5,128.06 325.5,123.52 326.5,119.55 327.5,114.1 328.5,109.66 329.5,103.96 330.5,99.31 331.5,95.51 332.5,90.9 333.5,87.02 334.5,83.93 335.5,79.12 336.5,74.82 337.5,71.29 338.5,68.12 339.5,65 340.5,61.19 341.5,58.07 342.5,57.2 343.5,54.51 344.5,53.4 345.5,52.59 346.5,51.34 347.5,49.64 348.5,47.81 349.5,48.35 350.5,49.34 351.5,49.07 352.5,49.74 353.5,49.95 354.5,50.73 355.5,53.35 356.5,54.27 357.5,56.94 358.5,60.47 359.5,63.56 360.5,66.15 361.5,67.99 362.5,70.91 363.5,75.68 364.5,78.46 365.5,82.64 366.5,86.77 367.5,91.09 368.5,96.64 369.5,101.17 370.5,106.07 371.5,109.37 372.5,114.2 373.5,119.76 374.5,124.4 375.5,128.39 376.5,133.76 377.5,136.88 378.5,140.15 379.5,144.43 380.5,147.92 381.5,152.8 382.5,155.43 383.5,158.74 384.5,161.8 385.5,165.43 386.5,169.39 387.5,171.19 388.5,173.04 389.5,174.86 390.5,176.56 391.5,177.09 392.5,179.27 393.5,180.04 394.5,179.22 395.5,179.59 396.5,180.26 397.5,178.82 398.5,177.92 399.5,177.49 400.5,175.04 401.5,172.95 402.5,171.81 403.5,169.3 404.5,166.98 405.5,164.47 406.5,159.99 407.5,156.38 408.5,151.86 409.5,148.77 410.5,144.55 411.5,139.98 412.5,137.2 413.5,131.96 414.5,127.75 415.5,123.32 416.5,117.86 417.5,113.38 418.5,109.46 419.5,104.49 420.5,99.93 421.5,96.53 422.5,92.34 423.5,87.36 424.5,82.66 425.5,78.63 426.5,74.91 427.5,71.56 428.5,67.8 429.5,64.01 430.5,60.86 431.5,59.02 432.5,57.72 433.5,55.63 434.5,53.92 435.5,51.19 436.5,50.96 437.5,49.34 438.5,48.55 439.5,48.69 440.5,48.87 441.5,49.44 442.5,48.65 443.5,48.88 444.5,51.65 445.5,53.85 446.5,54.36 447.5,56.12 448.5,58.79 449.5,61.12 450.5,63.87 451.5,68.62 452.5,72.18 453.5,75.44 454.5,79.75 455.5,82.88 456.5,86.5 457.5,90.41 458.5,96.07 459.5,99.69 460.5,103.74 461.5,109.67 462.5,114.93 462.5,114.2" fill="none" stroke="#f0f000" stroke-width="1.05"/>
<rect x="235" y="47.5" width="4.6" height="132.5" fill="#f0f000"/>
<path d="M235.8 48 L237.3 44.8 L238.8 48 Z" fill="#f0f000"/>
<path d="M6 114 L12.5 114" stroke="#e6e600" stroke-width="1.3"/>
<text x="3" y="111.8" font-size="7.2" fill="#e0e000" text-anchor="start" font-weight="normal" stroke="#e0e000" stroke-width="0.15" >C1</text>
<path d="M235 205.7 L237.5 199.6 L240.2 205.7 Z" fill="#f0f000"/>
<path d="M235 386 L237.5 380.6 L240.2 386 Z" fill="#ffc000"/>
<path d="M462.8 114 L468.5 110.8 L468.5 117.2 Z" fill="#e6e600"/>
<polyline points="13,284.5 13,305.04 14.4,305.04 14.4,305.04 14.4,249.57 16,249.57 16,249.57 16,322.66 17.6,322.66 17.6,322.66 17.6,277.26 18.4,277.26 18.4,277.26 18.4,276.02 19.2,276.02 19.2,276.02 19.2,278.29 20.8,278.29 20.8,278.29 20.8,288.57 22.4,288.57 22.4,288.57 22.4,312.21 23.4,312.21 23.4,312.21 23.4,267.37 25,267.37 25,267.37 25,299.71 26,299.71 26,299.71 26,270.75 27.2,270.75 27.2,270.75 27.2,258.4 28.4,258.4 28.4,258.4 28.4,307.38 30,307.38 30,307.38 30,314.14 31.2,314.14 31.2,314.14 31.2,254.02 32.8,254.02 32.8,254.02 32.8,283.87 34.2,283.87 34.2,283.87 34.2,291.67 35.4,291.67 35.4,291.67 35.4,249.24 36.2,249.24 36.2,249.24 36.2,339.56 37,339.56 37,339.56 37,226.5 37.8,226.5 37.8,226.5 37.8,335.33 38.8,335.33 38.8,335.33 38.8,278.54 40,278.54 40,278.54 40,240.25 41,240.25 41,240.25 41,342.5 41.8,342.5 41.8,342.5 41.8,283 43.4,283 43.4,283 43.4,268.4 45,268.4 45,268.4 45,292.47 46.4,292.47 46.4,292.47 46.4,298.77 47.8,298.77 47.8,298.77 47.8,261.55 49.4,261.55 49.4,261.55 49.4,284 50.2,284 50.2,284 50.2,288.32 51.8,288.32 51.8,288.32 51.8,295.76 52.8,295.76 52.8,295.76 52.8,272.19 54,272.19 54,272.19 54,293.42 55.4,293.42 55.4,293.42 55.4,278.87 56.4,278.87 56.4,278.87 56.4,257.64 57.4,257.64 57.4,257.64 57.4,321.21 58.8,321.21 58.8,321.21 58.8,272.75 59.8,272.75 59.8,272.75 59.8,273.08 60.8,273.08 60.8,273.08 60.8,296.63 62.4,296.63 62.4,296.63 62.4,268.95 63.8,268.95 63.8,268.95 63.8,310.76 64.6,310.76 64.6,310.76 64.6,254.71 66.2,254.71 66.2,254.71 66.2,309.85 67.4,309.85 67.4,309.85 67.4,270.72 69,270.72 69,270.72 69,268.41 69.8,268.41 69.8,268.41 69.8,304.31 71.2,304.31 71.2,304.31 71.2,255.2 72.4,255.2 72.4,255.2 72.4,301.69 73.4,301.69 73.4,301.69 73.4,295.51 74.4,295.51 74.4,295.51 74.4,278.67 75.4,278.67 75.4,278.67 75.4,286.56 76.2,286.56 76.2,286.56 76.2,307 77.6,307 77.6,307 77.6,288.31 79.2,288.31 79.2,288.31 79.2,259.23 80.8,259.23 80.8,259.23 80.8,290.15 82,290.15 82,290.15 82,282.27 82.8,282.27 82.8,282.27 82.8,278.87 84,278.87 84,278.87 84,285.94 84.8,285.94 84.8,285.94 84.8,305.39 85.8,305.39 85.8,305.39 85.8,276.03 87,276.03 87,276.03 87,261.56 88.4,261.56 88.4,261.56 88.4,317.47 89.2,317.47 89.2,317.47 89.2,278.82 90.6,278.82 90.6,278.82 90.6,255.99 91.4,255.99 91.4,255.99 91.4,294.88 92.6,294.88 92.6,294.88 92.6,285.41 93.8,285.41 93.8,285.41 93.8,269.2 95.2,269.2 95.2,269.2 95.2,320.1 96.8,320.1 96.8,320.1 96.8,286.62 98.4,286.62 98.4,286.62 98.4,268.89 99.2,268.89 99.2,268.89 99.2,283.42 100.8,283.42 100.8,283.42 100.8,273.2 102,273.2 102,273.2 102,278.96 103.6,278.96 103.6,278.96 103.6,302.39 105,302.39 105,302.39 105,290.76 106,290.76 106,290.76 106,264.8 107.4,264.8 107.4,264.8 107.4,315.49 108.4,315.49 108.4,315.49 108.4,275.33 109.6,275.33 109.6,275.33 109.6,262.92 110.6,262.92 110.6,262.92 110.6,265.41 111.4,265.41 111.4,265.41 111.4,314.68 112.6,314.68 112.6,314.68 112.6,287.15 113.6,287.15 113.6,287.15 113.6,274.37 115,274.37 115,274.37 115,278.59 116.6,278.59 116.6,278.59 116.6,284.38 117.4,284.38 117.4,284.38 117.4,303.29 118.6,303.29 118.6,303.29 118.6,267.55 119.8,267.55 119.8,267.55 119.8,283.7 121.2,283.7 121.2,283.7 121.2,280.21 122,280.21 122,280.21 122,302.07 122.8,302.07 122.8,302.07 122.8,270.92 123.6,270.92 123.6,270.92 123.6,275.98 124.8,275.98 124.8,275.98 124.8,312.34 125.8,312.34 125.8,312.34 125.8,282.8 126.6,282.8 126.6,282.8 126.6,295.71 128.2,295.71 128.2,295.71 128.2,265.61 129.4,265.61 129.4,265.61 129.4,277.18 131,277.18 131,277.18 131,241.44 132,241.44 132,241.44 132,336.91 133.4,336.91 133.4,336.91 133.4,296.31 134.2,296.31 134.2,296.31 134.2,285.24 135.8,285.24 135.8,285.24 135.8,261.57 137,261.57 137,261.57 137,280.02 138,280.02 138,280.02 138,324.77 138.8,324.77 138.8,324.77 138.8,277.34 140.2,277.34 140.2,277.34 140.2,308.73 141.4,308.73 141.4,308.73 141.4,236.94 142.2,236.94 142.2,236.94 142.2,285.98 143.8,285.98 143.8,285.98 143.8,293.49 145,293.49 145,293.49 145,275.54 145.8,275.54 145.8,275.54 145.8,288.5 146.6,288.5 146.6,288.5 146.6,290.73 147.6,290.73 147.6,290.73 147.6,290.37 149.2,290.37 149.2,290.37 149.2,287.3 150.6,287.3 150.6,287.3 150.6,258.35 152,258.35 152,258.35 152,274.62 153.4,274.62 153.4,274.62 153.4,294.06 154.6,294.06 154.6,294.06 154.6,305.49 156.2,305.49 156.2,305.49 156.2,257.41 157.8,257.41 157.8,257.41 157.8,300.93 159.4,300.93 159.4,300.93 159.4,308.55 160.4,308.55 160.4,308.55 160.4,279.92 161.4,279.92 161.4,279.92 161.4,262.26 162.2,262.26 162.2,262.26 162.2,287.62 163,287.62 163,287.62 163,269.5 164.6,269.5 164.6,269.5 164.6,298.53 165.4,298.53 165.4,298.53 165.4,284 166.8,284 166.8,284 166.8,281.24 168.2,281.24 168.2,281.24 168.2,287.72 169.6,287.72 169.6,287.72 169.6,304.03 171,304.03 171,304.03 171,259.74 171.8,259.74 171.8,259.74 171.8,290.68 172.8,290.68 172.8,290.68 172.8,273.02 173.8,273.02 173.8,273.02 173.8,256.41 175,256.41 175,256.41 175,318.87 175.8,318.87 175.8,318.87 175.8,303.92 177.4,303.92 177.4,303.92 177.4,284.72 178.4,284.72 178.4,284.72 178.4,284.14 179.8,284.14 179.8,284.14 179.8,293.3 181.4,293.3 181.4,293.3 181.4,265.98 182.4,265.98 182.4,265.98 182.4,293.87 183.4,293.87 183.4,293.87 183.4,257.48 185,257.48 185,257.48 185,291.78 186.2,291.78 186.2,291.78 186.2,287.33 187.4,287.33 187.4,287.33 187.4,262.85 188.4,262.85 188.4,262.85 188.4,290.82 189.4,290.82 189.4,290.82 189.4,310.52 190.8,310.52 190.8,310.52 190.8,272.86 192.2,272.86 192.2,272.86 192.2,266.49 193,266.49 193,266.49 193,301.32 194.6,301.32 194.6,301.32 194.6,276.94 195.4,276.94 195.4,276.94 195.4,267.48 196.6,267.48 196.6,267.48 196.6,292.01 197.4,292.01 197.4,292.01 197.4,307.67 198.2,307.67 198.2,307.67 198.2,304.01 199.8,304.01 199.8,304.01 199.8,269.98 200.8,269.98 200.8,269.98 200.8,284.11 202,284.11 202,284.11 202,289.91 202.8,289.91 202.8,289.91 202.8,267.6 203.6,267.6 203.6,267.6 203.6,287.8 204.8,287.8 204.8,287.8 204.8,275.85 205.8,275.85 205.8,275.85 205.8,307.5 206.6,307.5 206.6,307.5 206.6,271.17 208,271.17 208,271.17 208,284.14 209.2,284.14 209.2,284.14 209.2,279.38 210.8,279.38 210.8,279.38 210.8,298.68 212,298.68 212,298.68 212,300.61 213.4,300.61 213.4,300.61 213.4,245.32 214.4,245.32 214.4,245.32 214.4,257.71 215.6,257.71 215.6,257.71 215.6,327.44 216.4,327.44 216.4,327.44 216.4,284.75 217.8,284.75 217.8,284.75 217.8,258.56 219,258.56 219,258.56 219,328.77 220,328.77 220,328.77 220,250.74 221,250.74 221,250.74 221,313.67 221.8,313.67 221.8,313.67 221.8,277.78 223.4,277.78 223.4,277.78 223.4,290.2 224.6,290.2 224.6,290.2 224.6,276.51 226,276.51 226,276.51 226,263.38 227.4,263.38 227.4,263.38 227.4,293.73 228.2,293.73 228.2,293.73 228.2,231.19 229.8,231.19 229.8,231.19 229.8,342.5 231.4,342.5 231.4,342.5 231.4,282.79 232.4,282.79 232.4,282.79 232.4,275.98 233.6,275.98 233.6,275.98 233.6,284.04 235.2,284.04 235.2,284.04 235.2,270.78 236,270.78 236,270.78 236,296.01 236.8,296.01 236.8,296.01 236.8,266.61 238.2,266.61 238.2,266.61 238.2,299.39 239.2,299.39 239.2,299.39 239.2,260.58 240.8,260.58 240.8,260.58 240.8,342.43 241.6,342.43 241.6,342.43 241.6,241.16 243,241.16 243,241.16 243,308.62 244.2,308.62 244.2,308.62 244.2,259.26 245.4,259.26 245.4,259.26 245.4,298.6 246.6,298.6 246.6,298.6 246.6,314.18 247.6,314.18 247.6,314.18 247.6,262.69 249,262.69 249,262.69 249,292.77 250.6,292.77 250.6,292.77 250.6,276.14 251.8,276.14 251.8,276.14 251.8,310.25 253.2,310.25 253.2,310.25 253.2,269.36 254.2,269.36 254.2,269.36 254.2,276.27 255.6,276.27 255.6,276.27 255.6,279.72 256.6,279.72 256.6,279.72 256.6,276.42 258,276.42 258,276.42 258,285.95 258.8,285.95 258.8,285.95 258.8,283.56 259.8,283.56 259.8,283.56 259.8,297.13 261.2,297.13 261.2,297.13 261.2,259.63 262.4,259.63 262.4,259.63 262.4,289.19 264,289.19 264,289.19 264,300.98 265,300.98 265,300.98 265,273.43 265.8,273.43 265.8,273.43 265.8,278.9 267,278.9 267,278.9 267,297.57 268.6,297.57 268.6,297.57 268.6,276.81 269.8,276.81 269.8,276.81 269.8,274.08 270.8,274.08 270.8,274.08 270.8,320.33 271.8,320.33 271.8,320.33 271.8,261.57 272.6,261.57 272.6,261.57 272.6,288.47 273.4,288.47 273.4,288.47 273.4,284.44 274.2,284.44 274.2,284.44 274.2,288.19 275.2,288.19 275.2,288.19 275.2,294.69 276.4,294.69 276.4,294.69 276.4,257.75 277.8,257.75 277.8,257.75 277.8,300.37 278.6,300.37 278.6,300.37 278.6,288.49 279.6,288.49 279.6,288.49 279.6,263.08 280.8,263.08 280.8,263.08 280.8,293.65 282.4,293.65 282.4,293.65 282.4,296.97 284,296.97 284,296.97 284,280.49 285.2,280.49 285.2,280.49 285.2,253.92 286.6,253.92 286.6,253.92 286.6,317.89 288.2,317.89 288.2,317.89 288.2,275.64 289.6,275.64 289.6,275.64 289.6,280.83 290.6,280.83 290.6,280.83 290.6,318.14 292.2,318.14 292.2,318.14 292.2,270.45 293.4,270.45 293.4,270.45 293.4,279.49 294.4,279.49 294.4,279.49 294.4,282.45 295.2,282.45 295.2,282.45 295.2,302.32 296.6,302.32 296.6,302.32 296.6,230.78 297.8,230.78 297.8,230.78 297.8,301.34 299,301.34 299,301.34 299,288.55 300.6,288.55 300.6,288.55 300.6,297.93 301.8,297.93 301.8,297.93 301.8,283.28 303.4,283.28 303.4,283.28 303.4,279.86 304.4,279.86 304.4,279.86 304.4,286.48 305.4,286.48 305.4,286.48 305.4,270.72 307,270.72 307,270.72 307,302.28 308.2,302.28 308.2,302.28 308.2,287.57 309.2,287.57 309.2,287.57 309.2,259.13 310,259.13 310,259.13 310,301.93 311.4,301.93 311.4,301.93 311.4,304.35 312.2,304.35 312.2,304.35 312.2,274.2 313.4,274.2 313.4,274.2 313.4,274.17 314.4,274.17 314.4,274.17 314.4,254.11 315.8,254.11 315.8,254.11 315.8,317.9 317.4,317.9 317.4,317.9 317.4,295.12 318.8,295.12 318.8,295.12 318.8,262.48 319.8,262.48 319.8,262.48 319.8,304.26 321.4,304.26 321.4,304.26 321.4,277.86 322.2,277.86 322.2,277.86 322.2,276.81 323.4,276.81 323.4,276.81 323.4,307.15 324.8,307.15 324.8,307.15 324.8,245.17 325.6,245.17 325.6,245.17 325.6,282.72 327,282.72 327,282.72 327,304.98 328,304.98 328,304.98 328,288.39 329,288.39 329,288.39 329,293.47 330.4,293.47 330.4,293.47 330.4,263.8 331.2,263.8 331.2,263.8 331.2,301.83 332,301.83 332,301.83 332,275.68 332.8,275.68 332.8,275.68 332.8,295.98 333.6,295.98 333.6,295.98 333.6,246.66 334.4,246.66 334.4,246.66 334.4,296.72 335.6,296.72 335.6,296.72 335.6,303.93 337.2,303.93 337.2,303.93 337.2,293.31 338.6,293.31 338.6,293.31 338.6,278.38 339.8,278.38 339.8,278.38 339.8,291.05 341.4,291.05 341.4,291.05 341.4,261 342.6,261 342.6,261 342.6,297.99 343.4,297.99 343.4,297.99 343.4,272.06 344.4,272.06 344.4,272.06 344.4,296.58 345.8,296.58 345.8,296.58 345.8,310.58 346.6,310.58 346.6,310.58 346.6,253.09 347.6,253.09 347.6,253.09 347.6,313.23 349,313.23 349,313.23 349,240.14 350.4,240.14 350.4,240.14 350.4,297.15 351.6,297.15 351.6,297.15 351.6,286.02 353.2,286.02 353.2,286.02 353.2,307.43 354.8,307.43 354.8,307.43 354.8,285.89 355.8,285.89 355.8,285.89 355.8,257.05 356.8,257.05 356.8,257.05 356.8,289 357.6,289 357.6,289 357.6,275.97 359,275.97 359,275.97 359,314.46 359.8,314.46 359.8,314.46 359.8,287.12 361,287.12 361,287.12 361,270.19 361.8,270.19 361.8,270.19 361.8,288.39 363.2,288.39 363.2,288.39 363.2,280.13 364.2,280.13 364.2,280.13 364.2,298.23 365.4,298.23 365.4,298.23 365.4,259.37 366.8,259.37 366.8,259.37 366.8,305.34 367.6,305.34 367.6,305.34 367.6,255.01 369,255.01 369,255.01 369,317.76 369.8,317.76 369.8,317.76 369.8,264.88 371.2,264.88 371.2,264.88 371.2,283.88 372.8,283.88 372.8,283.88 372.8,306.68 373.8,306.68 373.8,306.68 373.8,281.74 374.8,281.74 374.8,281.74 374.8,263.31 376,263.31 376,263.31 376,302.85 377.4,302.85 377.4,302.85 377.4,263.72 378.8,263.72 378.8,263.72 378.8,288.45 380,288.45 380,288.45 380,282.22 381.2,282.22 381.2,282.22 381.2,300.58 382.6,300.58 382.6,300.58 382.6,280.11 383.6,280.11 383.6,280.11 383.6,282.03 385,282.03 385,282.03 385,296.66 385.8,296.66 385.8,296.66 385.8,271.59 386.8,271.59 386.8,271.59 386.8,297.05 388,297.05 388,297.05 388,266.71 389.4,266.71 389.4,266.71 389.4,293.41 390.4,293.41 390.4,293.41 390.4,273.14 391.8,273.14 391.8,273.14 391.8,253.51 393.2,253.51 393.2,253.51 393.2,323.03 394.4,323.03 394.4,323.03 394.4,307.91 396,307.91 396,307.91 396,254.21 397.2,254.21 397.2,254.21 397.2,280.68 398,280.68 398,280.68 398,303.8 399,303.8 399,303.8 399,244.83 400.6,244.83 400.6,244.83 400.6,310.17 401.8,310.17 401.8,310.17 401.8,289.57 403,289.57 403,289.57 403,247.73 404.6,247.73 404.6,247.73 404.6,333.21 406.2,333.21 406.2,333.21 406.2,288.14 407.2,288.14 407.2,288.14 407.2,262.16 408,262.16 408,262.16 408,286.31 409.4,286.31 409.4,286.31 409.4,264.74 410.6,264.74 410.6,264.74 410.6,294.67 411.4,294.67 411.4,294.67 411.4,271.62 413,271.62 413,271.62 413,315.86 414.6,315.86 414.6,315.86 414.6,308.81 415.8,308.81 415.8,308.81 415.8,266.18 416.6,266.18 416.6,266.18 416.6,272.35 417.8,272.35 417.8,272.35 417.8,282.72 419.4,282.72 419.4,282.72 419.4,278.96 420.2,278.96 420.2,278.96 420.2,297.67 421.6,297.67 421.6,297.67 421.6,296.86 422.6,296.86 422.6,296.86 422.6,306.41 424,306.41 424,306.41 424,226.55 425,226.55 425,226.55 425,286.43 426.4,286.43 426.4,286.43 426.4,317.76 427.8,317.76 427.8,317.76 427.8,269.84 429.4,269.84 429.4,269.84 429.4,288.44 430.2,288.44 430.2,288.44 430.2,285.17 431,285.17 431,285.17 431,271.14 432.4,271.14 432.4,271.14 432.4,262.49 433.8,262.49 433.8,262.49 433.8,292.71 435.4,292.71 435.4,292.71 435.4,330.4 436.6,330.4 436.6,330.4 436.6,226.5 438,226.5 438,226.5 438,338.87 438.8,338.87 438.8,338.87 438.8,249.23 440.4,249.23 440.4,249.23 440.4,301.75 441.8,301.75 441.8,301.75 441.8,309.29 443.4,309.29 443.4,309.29 443.4,265.55 444.8,265.55 444.8,265.55 444.8,271.04 446.4,271.04 446.4,271.04 446.4,290.79 447.4,290.79 447.4,290.79 447.4,311.35 448.8,311.35 448.8,311.35 448.8,284.42 450.2,284.42 450.2,284.42 450.2,266.18 451.4,266.18 451.4,266.18 451.4,273.11 452.4,273.11 452.4,273.11 452.4,342.5 453.6,342.5 453.6,342.5 453.6,226.5 455,226.5 455,226.5 455,316.38 456.4,316.38 456.4,316.38 456.4,289.41 457.2,289.41 457.2,289.41 457.2,310.51 458.8,310.51 458.8,310.51 458.8,278.07 460.2,278.07 460.2,278.07 460.2,280.14 461.4,280.14 461.4,280.14 461.4,272.95 462.8,272.95" fill="none" stroke="#d49c00" stroke-width="0.9"/>
<path d="M12.5 294.6 H462.5" stroke="#6a6a78" stroke-width="1" opacity="0.55"/>
<text x="2.8" y="378.8" font-size="7.2" fill="#e0a800" text-anchor="start" font-weight="normal" stroke="#e0a800" stroke-width="0.15" >C2</text>
<path d="M6.2 376 L6.2 382 M3.6 380.4 L6.2 383.5 L8.8 380.4 Z" stroke="#e0a800" fill="#e0a800" stroke-width="0.9"/>
<path d="M525.2 336.6 V333.3 H526.7 V336.6 Z M532 336.6 V333.3 H533.4 V336.6 Z M535.6 336.6 V334.8 H538.6 V336.6 Z M540.9 336.6 V333.3 H542.3 V336.6 Z M544.6 336.6 V333.3 H549 V336.6 Z M549 336.6 V327.3 H552 V336.6 Z M552 336.6 V333.3 H554.6 V336.6 Z M554.6 336.6 V330.3 H565.4 V336.6 Z M565.4 336.6 V333.3 H567.7 V336.6 Z M567.7 336.6 V330.3 H569.9 V336.6 Z M569.9 336.6 V321 H572.1 V336.6 Z M572.1 336.6 V323.6 H574.4 V336.6 Z M574.4 336.6 V321 H576.6 V336.6 Z M576.6 336.6 V333.3 H578.5 V336.6 Z M578.5 336.6 V301.7 H581.1 V336.6 Z M581.1 336.6 V312.4 H583.3 V336.6 Z M583.3 336.6 V314.4 H585.5 V336.6 Z M585.5 336.6 V320.6 H590 V336.6 Z M590 336.6 V318 H592.5 V336.6 Z M592.5 336.6 V282.7 H594.8 V336.6 Z M594.8 336.6 V307.2 H597 V336.6 Z M597 336.6 V289 H599.2 V336.6 Z M599.2 336.6 V297.6 H601.5 V336.6 Z M601.5 336.6 V280.4 H603.7 V336.6 Z M603.7 336.6 V276.7 H605.9 V336.6 Z M605.9 336.6 V294.6 H608.2 V336.6 Z M608.2 336.6 V282.7 H610.4 V336.6 Z M610.4 336.6 V274.2 H612.6 V336.6 Z M612.6 336.6 V267 H614.8 V336.6 Z M614.8 336.6 V255.7 H617 V336.6 Z M617 336.6 V283 H618.9 V336.6 Z M618.9 336.6 V251 H621.9 V336.6 Z M621.9 336.6 V235 H624.2 V336.6 Z M624.2 336.6 V251 H626.4 V336.6 Z M626.4 336.6 V241.3 H628.6 V336.6 Z M628.6 336.6 V230.9 H630.9 V336.6 Z M630.9 336.6 V227.6 H633.1 V336.6 Z M633.1 336.6 V224.1 H635.3 V336.6 Z M635.3 336.6 V244 H637.6 V336.6 Z M637.6 336.6 V258.9 H642 V336.6 Z M642 336.6 V224.9 H644.3 V336.6 Z M644.3 336.6 V216 H646.5 V336.6 Z M646.5 336.6 V213.7 H648.4 V336.6 Z M648.4 336.6 V191.7 H650.5 V336.6 Z M650.5 336.6 V180 H652.8 V336.6 Z M652.8 336.6 V163 H655.7 V336.6 Z M655.7 336.6 V167.9 H658 V336.6 Z M658 336.6 V138 H660.3 V336.6 Z M660.3 336.6 V107.2 H662.5 V336.6 Z M662.5 336.6 V120.9 H664.7 V336.6 Z M664.7 336.6 V176.8 H666.8 V336.6 Z M666.8 336.6 V115.4 H669 V336.6 Z M669 336.6 V122.8 H671.2 V336.6 Z M671.2 336.6 V144.7 H673.4 V336.6 Z M673.4 336.6 V80.8 H675.8 V336.6 Z M675.8 336.6 V155.6 H678 V336.6 Z M678 336.6 V157.9 H680.3 V336.6 Z M680.3 336.6 V175 H682.3 V336.6 Z M682.3 336.6 V118 H684.4 V336.6 Z M684.4 336.6 V137.7 H686.6 V336.6 Z M686.6 336.6 V74.1 H689.1 V336.6 Z M689.1 336.6 V109.9 H691.7 V336.6 Z M691.7 336.6 V129.8 H693.8 V336.6 Z M693.8 336.6 V187 H696 V336.6 Z M696 336.6 V169 H698.6 V336.6 Z M698.6 336.6 V162.3 H700.9 V336.6 Z M700.9 336.6 V121.8 H703.2 V336.6 Z M703.2 336.6 V141 H707.2 V336.6 Z M707.2 336.6 V187 H709.4 V336.6 Z M709.4 336.6 V201.4 H711.6 V336.6 Z M711.6 336.6 V191 H713.8 V336.6 Z M713.8 336.6 V158.2 H716 V336.6 Z M716 336.6 V174 H718.3 V336.6 Z M718.3 336.6 V181 H720.5 V336.6 Z M720.5 336.6 V187 H722.8 V336.6 Z M722.8 336.6 V185.9 H725.3 V336.6 Z M725.3 336.6 V154.9 H728 V336.6 Z M728 336.6 V219 H730.2 V336.6 Z M730.2 336.6 V178.4 H732.1 V336.6 Z M732.1 336.6 V238.8 H734.7 V336.6 Z M734.7 336.6 V238.1 H736.9 V336.6 Z M736.9 336.6 V250.4 H739.1 V336.6 Z M739.1 336.6 V215 H741.2 V336.6 Z M741.2 336.6 V208 H743.3 V336.6 Z M743.3 336.6 V246.6 H745.4 V336.6 Z M745.4 336.6 V210 H747.7 V336.6 Z M747.7 336.6 V259.6 H749.8 V336.6 Z M749.8 336.6 V247.5 H752 V336.6 Z M752 336.6 V220.8 H754.2 V336.6 Z M754.2 336.6 V207 H756.4 V336.6 Z M756.4 336.6 V269.8 H758.6 V336.6 Z M758.6 336.6 V255.1 H761.6 V336.6 Z M761.6 336.6 V267.3 H763.8 V336.6 Z M763.8 336.6 V274 H766.1 V336.6 Z M766.1 336.6 V276.2 H768 V336.6 Z M768 336.6 V299.8 H770.5 V336.6 Z M770.5 336.6 V296 H772.8 V336.6 Z M772.8 336.6 V305 H775 V336.6 Z M775 336.6 V291.6 H776.9 V336.6 Z M776.9 336.6 V304 H779 V336.6 Z M779 336.6 V304.6 H781.4 V336.6 Z M781.4 336.6 V304 H783.5 V336.6 Z M783.5 336.6 V289.4 H785.9 V336.6 Z M785.9 336.6 V292.3 H788 V336.6 Z M788 336.6 V314.7 H790.3 V336.6 Z M790.3 336.6 V308.4 H792.4 V336.6 Z M792.4 336.6 V312.2 H795.1 V336.6 Z M795.1 336.6 V320.6 H799.6 V336.6 Z M799.6 336.6 V318.1 H801.8 V336.6 Z M801.8 336.6 V327.3 H804 V336.6 Z M804 336.6 V318 H806.3 V336.6 Z M806.3 336.6 V333.3 H808.5 V336.6 Z M808.5 336.6 V321 H810.7 V336.6 Z M810.7 336.6 V333.3 H813 V336.6 Z M813 336.6 V318 H815.2 V336.6 Z M815.2 336.6 V330.3 H817.4 V336.6 Z M817.4 336.6 V333.3 H821.9 V336.6 Z M821.9 336.6 V330.3 H824.2 V336.6 Z M824.2 336.6 V333.3 H826.4 V336.6 Z M826.4 336.6 V326.9 H829.1 V336.6 Z M829.1 336.6 V333.7 H831.6 V336.6 Z M831.6 336.6 V335.2 H833.8 V336.6 Z M836.1 336.6 V333.3 H842.8 V336.6 Z M842.8 336.6 V334.8 H844.3 V336.6 Z M848.7 336.6 V333.3 H851 V336.6 Z M853.2 336.6 V333.3 H855.4 V336.6 Z M857.7 336.6 V333.3 H862.1 V336.6 Z M875.5 336.6 V334.8 H878.5 V336.6 Z" fill="#ff5e8a"/>
<rect x="476" y="335.7" width="456" height="1" fill="#d8507a"/>
<text x="473.5" y="334.4" font-size="7" fill="#ff6a95" text-anchor="start" font-weight="normal" >F2</text>
<path d="M480 383.5 L485.5 383.5 M482.3 381.2 L480 383.5 L482.3 385.8" stroke="#ff5e8a" fill="none" stroke-width="1"/>
<rect x="2" y="399" width="925.5" height="11.8" fill="#1c1c1c"/>
<rect x="2" y="422.6" width="925.5" height="11.8" fill="#1c1c1c"/>
<rect x="2" y="446.2" width="925.5" height="11.8" fill="#1c1c1c"/>
<rect x="2" y="469.8" width="925.5" height="11.8" fill="#1c1c1c"/>
<rect x="2" y="398.9" width="925.5" height="2.1" fill="#3c3c3c"/>
<text x="3.5" y="397.5" font-size="9" fill="#f0f0f0" text-anchor="start" font-weight="bold" stroke="#f0f0f0" stroke-width="0.2" letter-spacing="0.05" >Measure</text>
<text x="144.4" y="397.5" font-size="9" fill="#f0f0f0" text-anchor="end" font-weight="normal" stroke="#f0f0f0" stroke-width="0.2" letter-spacing="0.05" >P1:freq(C1)</text>
<text x="214.9" y="397.5" font-size="9" fill="#5a5a5a" text-anchor="end" font-weight="normal" stroke="#5a5a5a" stroke-width="0.2" letter-spacing="0.05" >P2:- - -</text>
<text x="286.3" y="397.5" font-size="9" fill="#5a5a5a" text-anchor="end" font-weight="normal" stroke="#5a5a5a" stroke-width="0.2" letter-spacing="0.05" >P3:- - -</text>
<text x="357.7" y="397.5" font-size="9" fill="#5a5a5a" text-anchor="end" font-weight="normal" stroke="#5a5a5a" stroke-width="0.2" letter-spacing="0.05" >P4:- - -</text>
<text x="429.1" y="397.5" font-size="9" fill="#5a5a5a" text-anchor="end" font-weight="normal" stroke="#5a5a5a" stroke-width="0.2" letter-spacing="0.05" >P5:- - -</text>
<text x="500.5" y="397.5" font-size="9" fill="#5a5a5a" text-anchor="end" font-weight="normal" stroke="#5a5a5a" stroke-width="0.2" letter-spacing="0.05" >P6:- - -</text>
<text x="571.9" y="397.5" font-size="9" fill="#5a5a5a" text-anchor="end" font-weight="normal" stroke="#5a5a5a" stroke-width="0.2" letter-spacing="0.05" >P7:- - -</text>
<text x="643.3" y="397.5" font-size="9" fill="#5a5a5a" text-anchor="end" font-weight="normal" stroke="#5a5a5a" stroke-width="0.2" letter-spacing="0.05" >P8:- - -</text>
<text x="714.7" y="397.5" font-size="9" fill="#5a5a5a" text-anchor="end" font-weight="normal" stroke="#5a5a5a" stroke-width="0.2" letter-spacing="0.05" >P9:- - -</text>
<text x="786.1" y="397.5" font-size="9" fill="#5a5a5a" text-anchor="end" font-weight="normal" stroke="#5a5a5a" stroke-width="0.2" letter-spacing="0.05" >P10:- - -</text>
<text x="857.5" y="397.5" font-size="9" fill="#5a5a5a" text-anchor="end" font-weight="normal" stroke="#5a5a5a" stroke-width="0.2" letter-spacing="0.05" >P11:- - -</text>
<text x="928.9" y="397.5" font-size="9" fill="#5a5a5a" text-anchor="end" font-weight="normal" stroke="#5a5a5a" stroke-width="0.2" letter-spacing="0.05" >P12:- - -</text>
<text x="3.5" y="408.4" font-size="9" fill="#e8e8e8" text-anchor="start" font-weight="normal" stroke="#e8e8e8" stroke-width="0.2" letter-spacing="0.05" >value</text>
<text x="144.4" y="408.4" font-size="9" fill="#e8e8e8" text-anchor="end" font-weight="normal" stroke="#e8e8e8" stroke-width="0.2" letter-spacing="0.05" >502.31 MHz</text>
<text x="3.5" y="420.2" font-size="9" fill="#e8e8e8" text-anchor="start" font-weight="normal" stroke="#e8e8e8" stroke-width="0.2" letter-spacing="0.05" >mean</text>
<text x="144.4" y="420.2" font-size="9" fill="#e8e8e8" text-anchor="end" font-weight="normal" stroke="#e8e8e8" stroke-width="0.2" letter-spacing="0.05" >500.011 MHz</text>
<text x="3.5" y="432" font-size="9" fill="#e8e8e8" text-anchor="start" font-weight="normal" stroke="#e8e8e8" stroke-width="0.2" letter-spacing="0.05" >min</text>
<text x="144.4" y="432" font-size="9" fill="#e8e8e8" text-anchor="end" font-weight="normal" stroke="#e8e8e8" stroke-width="0.2" letter-spacing="0.05" >490.79 MHz</text>
<text x="3.5" y="443.8" font-size="9" fill="#e8e8e8" text-anchor="start" font-weight="normal" stroke="#e8e8e8" stroke-width="0.2" letter-spacing="0.05" >max</text>
<text x="144.4" y="443.8" font-size="9" fill="#e8e8e8" text-anchor="end" font-weight="normal" stroke="#e8e8e8" stroke-width="0.2" letter-spacing="0.05" >508.41 MHz</text>
<text x="3.5" y="455.6" font-size="9" fill="#e8e8e8" text-anchor="start" font-weight="normal" stroke="#e8e8e8" stroke-width="0.2" letter-spacing="0.05" >sdev</text>
<text x="144.4" y="455.6" font-size="9" fill="#e8e8e8" text-anchor="end" font-weight="normal" stroke="#e8e8e8" stroke-width="0.2" letter-spacing="0.05" >2.205 MHz</text>
<text x="3.5" y="467.4" font-size="9" fill="#e8e8e8" text-anchor="start" font-weight="normal" stroke="#e8e8e8" stroke-width="0.2" letter-spacing="0.05" >num</text>
<text x="144.4" y="467.4" font-size="9" fill="#e8e8e8" text-anchor="end" font-weight="normal" stroke="#e8e8e8" stroke-width="0.2" letter-spacing="0.05" >1.417308e+6</text>
<text x="3.5" y="479.2" font-size="9" fill="#e8e8e8" text-anchor="start" font-weight="normal" stroke="#e8e8e8" stroke-width="0.2" letter-spacing="0.05" >status</text>
<path d="M135.8 476.5 L138.3 479.3 L143.6 473" fill="none" stroke="#22e022" stroke-width="1.7"/>
<text x="3.5" y="496.7" font-size="9" fill="#e8e8e8" text-anchor="start" font-weight="normal" stroke="#e8e8e8" stroke-width="0.2" letter-spacing="0.05" >histo</text>
<path d="M75.1 501.8 V500.4 H78.1 V501.8 Z M78.1 501.8 V499.8 H79.8 V501.8 Z M79.8 501.8 V500.9 H84.5 V501.8 Z M84.5 501.8 V500.2 H95.5 V501.8 Z M95.5 501.8 V498.3 H97.2 V501.8 Z M97.2 501.8 V497 H99.4 V501.8 Z M99.4 501.8 V495.1 H103.2 V501.8 Z M103.2 501.8 V492.8 H104 V501.8 Z M104 501.8 V490 H105.3 V501.8 Z M105.3 501.8 V487.7 H107.4 V501.8 Z M107.4 501.8 V488.3 H108.7 V501.8 Z M108.7 501.8 V486.1 H109.8 V501.8 Z M109.8 501.8 V488.5 H110.9 V501.8 Z M110.9 501.8 V489.5 H112.6 V501.8 Z M112.6 501.8 V489 H114.3 V501.8 Z M114.3 501.8 V490.6 H116 V501.8 Z M116 501.8 V494 H118.5 V501.8 Z M118.5 501.8 V495.3 H121 V501.8 Z M121 501.8 V498.6 H123.2 V501.8 Z M123.2 501.8 V499.4 H125.3 V501.8 Z M125.3 501.8 V500.3 H138.1 V501.8 Z M138.1 501.8 V499.8 H139.4 V501.8 Z M139.4 501.8 V500.6 H144 V501.8 Z" fill="#00ee00"/>
<rect x="2.8" y="505.6" width="71.5" height="43.6" fill="#2c4e6a" stroke="#2a8cf0" stroke-width="1.3"/>
<rect x="3.2" y="506.2" width="70.7" height="10.8" fill="#f5f000"/>
<text x="5.2" y="515.1" font-size="9" fill="#222" text-anchor="start" font-weight="normal" stroke="#222" stroke-width="0.12" letter-spacing="0.05" >C1</text>
<text x="73" y="526.7" font-size="9.4" fill="#e8e8e8" text-anchor="end" font-weight="normal" stroke="#e8e8e8" stroke-width="0.2" letter-spacing="-0.25" >50.0 mV/div</text>
<text x="73" y="536.8" font-size="9.4" fill="#e8e8e8" text-anchor="end" font-weight="normal" stroke="#e8e8e8" stroke-width="0.2" letter-spacing="-0.25" >0.0 mV ofst</text>
<rect x="50.1" y="507.1" width="21.8" height="8.6" rx="1.8" fill="#0a0a0a"/>
<text x="61" y="514.3" font-size="8.4" fill="#dede00" text-anchor="middle" font-weight="normal" textLength="18.5" lengthAdjust="spacingAndGlyphs">DC50</text>
<rect x="76.2" y="505.9" width="71.8" height="43.9" fill="#454545"/>
<rect x="76.2" y="505.9" width="71.8" height="11.1" fill="#ffc300"/>
<text x="79.2" y="515.1" font-size="9" fill="#222" text-anchor="start" font-weight="normal" stroke="#222" stroke-width="0.12" letter-spacing="0.05" >C2</text>
<text x="146" y="515.1" font-size="9" fill="#222" text-anchor="end" font-weight="normal" stroke="#222" stroke-width="0.12" letter-spacing="0.05" >track(P1)</text>
<text x="146.1" y="526.7" font-size="9.4" fill="#e8e8e8" text-anchor="end" font-weight="normal" stroke="#e8e8e8" stroke-width="0.2" letter-spacing="-0.25" >2.45 MHz</text>
<text x="146.1" y="536.8" font-size="9.4" fill="#e8e8e8" text-anchor="end" font-weight="normal" stroke="#e8e8e8" stroke-width="0.2" letter-spacing="-0.25" >100 ns/div</text>
<rect x="149.8" y="505.9" width="71.4" height="43.9" fill="#454545"/>
<rect x="149.8" y="505.9" width="71.4" height="11.1" fill="#ff5a85"/>
<text x="152.8" y="515.1" font-size="9" fill="#222" text-anchor="start" font-weight="normal" stroke="#222" stroke-width="0.12" letter-spacing="0.05" >F2</text>
<text x="219.2" y="515.1" font-size="9" fill="#222" text-anchor="end" font-weight="normal" stroke="#222" stroke-width="0.12" letter-spacing="0.05" >hist(P1)</text>
<text x="219.3" y="526.7" font-size="9.4" fill="#e8e8e8" text-anchor="end" font-weight="normal" stroke="#e8e8e8" stroke-width="0.2" letter-spacing="-0.25" >200 #/div</text>
<text x="219.3" y="536.8" font-size="9.4" fill="#e8e8e8" text-anchor="end" font-weight="normal" stroke="#e8e8e8" stroke-width="0.2" letter-spacing="-0.25" >2.00 MHz</text>
<text x="219.3" y="546.9" font-size="9.4" fill="#e8e8e8" text-anchor="end" font-weight="normal" stroke="#e8e8e8" stroke-width="0.2" letter-spacing="-0.25" >49.986 k#</text>
<rect x="223.3" y="505.6" width="71.1" height="43.6" fill="#2c4e6a" stroke="#2a8cf0" stroke-width="1.3"/>
<rect x="223.7" y="506.2" width="70.3" height="10.8" fill="#f5f000"/>
<text x="225.7" y="515.1" font-size="9" fill="#222" text-anchor="start" font-weight="normal" stroke="#222" stroke-width="0.12" letter-spacing="0.05" >Z1</text>
<text x="293" y="515.1" font-size="9" fill="#222" text-anchor="end" font-weight="normal" stroke="#222" stroke-width="0.12" letter-spacing="0.05" >zoom(C1)</text>
<text x="293.1" y="526.7" font-size="9.4" fill="#e8e8e8" text-anchor="end" font-weight="normal" stroke="#e8e8e8" stroke-width="0.2" letter-spacing="-0.25" >50.0 mV/div</text>
<text x="293.1" y="536.8" font-size="9.4" fill="#e8e8e8" text-anchor="end" font-weight="normal" stroke="#e8e8e8" stroke-width="0.2" letter-spacing="-0.25" >1.00 ns/div</text>
<rect x="780.7" y="505.9" width="81.9" height="33.6" fill="#454545"/>
<rect x="780.7" y="505.9" width="81.9" height="10.4" fill="#f8f8f8"/>
<text x="783.4" y="514.6" font-size="9" fill="#2a2040" text-anchor="start" font-weight="normal" stroke="#2a2040" stroke-width="0.12" letter-spacing="0.05" >Timebase</text>
<text x="861.2" y="514.6" font-size="9" fill="#2a2040" text-anchor="end" font-weight="normal" stroke="#2a2040" stroke-width="0.12" letter-spacing="0.05" >0 ns</text>
<text x="861.7" y="526.3" font-size="9" fill="#e8e8e8" text-anchor="end" font-weight="normal" stroke="#e8e8e8" stroke-width="0.2" letter-spacing="0.05" >100 ns/div</text>
<text x="783.1" y="536.4" font-size="9" fill="#e8e8e8" text-anchor="start" font-weight="normal" stroke="#e8e8e8" stroke-width="0.2" letter-spacing="0.05" >40.0 kS</text>
<text x="861.2" y="536.4" font-size="9" fill="#e8e8e8" text-anchor="end" font-weight="normal" stroke="#e8e8e8" stroke-width="0.2" letter-spacing="0.05" >40 GS/s</text>
<rect x="865.3" y="505.9" width="70.4" height="33.6" fill="#454545"/>
<rect x="865.3" y="505.9" width="70.4" height="10.4" fill="#f8f8f8"/>
<text x="867.2" y="514.6" font-size="9" fill="#2a2040" text-anchor="start" font-weight="normal" stroke="#2a2040" stroke-width="0.12" letter-spacing="0.05" >Trigger</text>
<rect x="905.6" y="507.2" width="12.4" height="7.9" rx="1.8" fill="#111"/>
<text x="911.8" y="514.3" font-size="8" fill="#f0f0f0" text-anchor="middle" font-weight="normal" >C1</text>
<rect x="920.1" y="507.2" width="14" height="7.9" rx="1.8" fill="#111"/>
<text x="927.1" y="514.3" font-size="8" fill="#f0f0f0" text-anchor="middle" font-weight="normal" >DC</text>
<text x="867.2" y="526.3" font-size="9" fill="#e8e8e8" text-anchor="start" font-weight="normal" stroke="#e8e8e8" stroke-width="0.2" letter-spacing="0.05" >Stop</text>
<text x="935.2" y="526.3" font-size="9" fill="#e8e8e8" text-anchor="end" font-weight="normal" stroke="#e8e8e8" stroke-width="0.2" letter-spacing="0.05" >0.0 mV</text>
<text x="867.2" y="536.4" font-size="9" fill="#e8e8e8" text-anchor="start" font-weight="normal" stroke="#e8e8e8" stroke-width="0.2" letter-spacing="0.05" >Edge</text>
<text x="935.2" y="536.4" font-size="9" fill="#e8e8e8" text-anchor="end" font-weight="normal" stroke="#e8e8e8" stroke-width="0.2" letter-spacing="0.05" >Positive</text>
<rect x="0" y="551" width="940" height="13" fill="#262626"/>
<rect x="0" y="550.8" width="940" height="1.6" fill="#4a4a4a"/><rect x="0" y="552.4" width="940" height="1" fill="#333"/>
<g transform="translate(4.5 561.7) scale(0.87 1)"><text x="0" y="0" font-size="10.6" font-weight="bold" fill="#f2f2f2">TELEDYNE</text></g>
<g transform="translate(56.2 561.7) scale(0.8 1)"><text x="0" y="0" font-size="10.6" fill="#dddddd">LECROY</text></g>
<text x="929" y="561.5" font-size="9" fill="#e8e8e8" text-anchor="end" font-weight="normal" stroke="#e8e8e8" stroke-width="0.2" letter-spacing="0.05" >3/17/2015 1:04:12 PM</text>
</svg>
</body></html>
